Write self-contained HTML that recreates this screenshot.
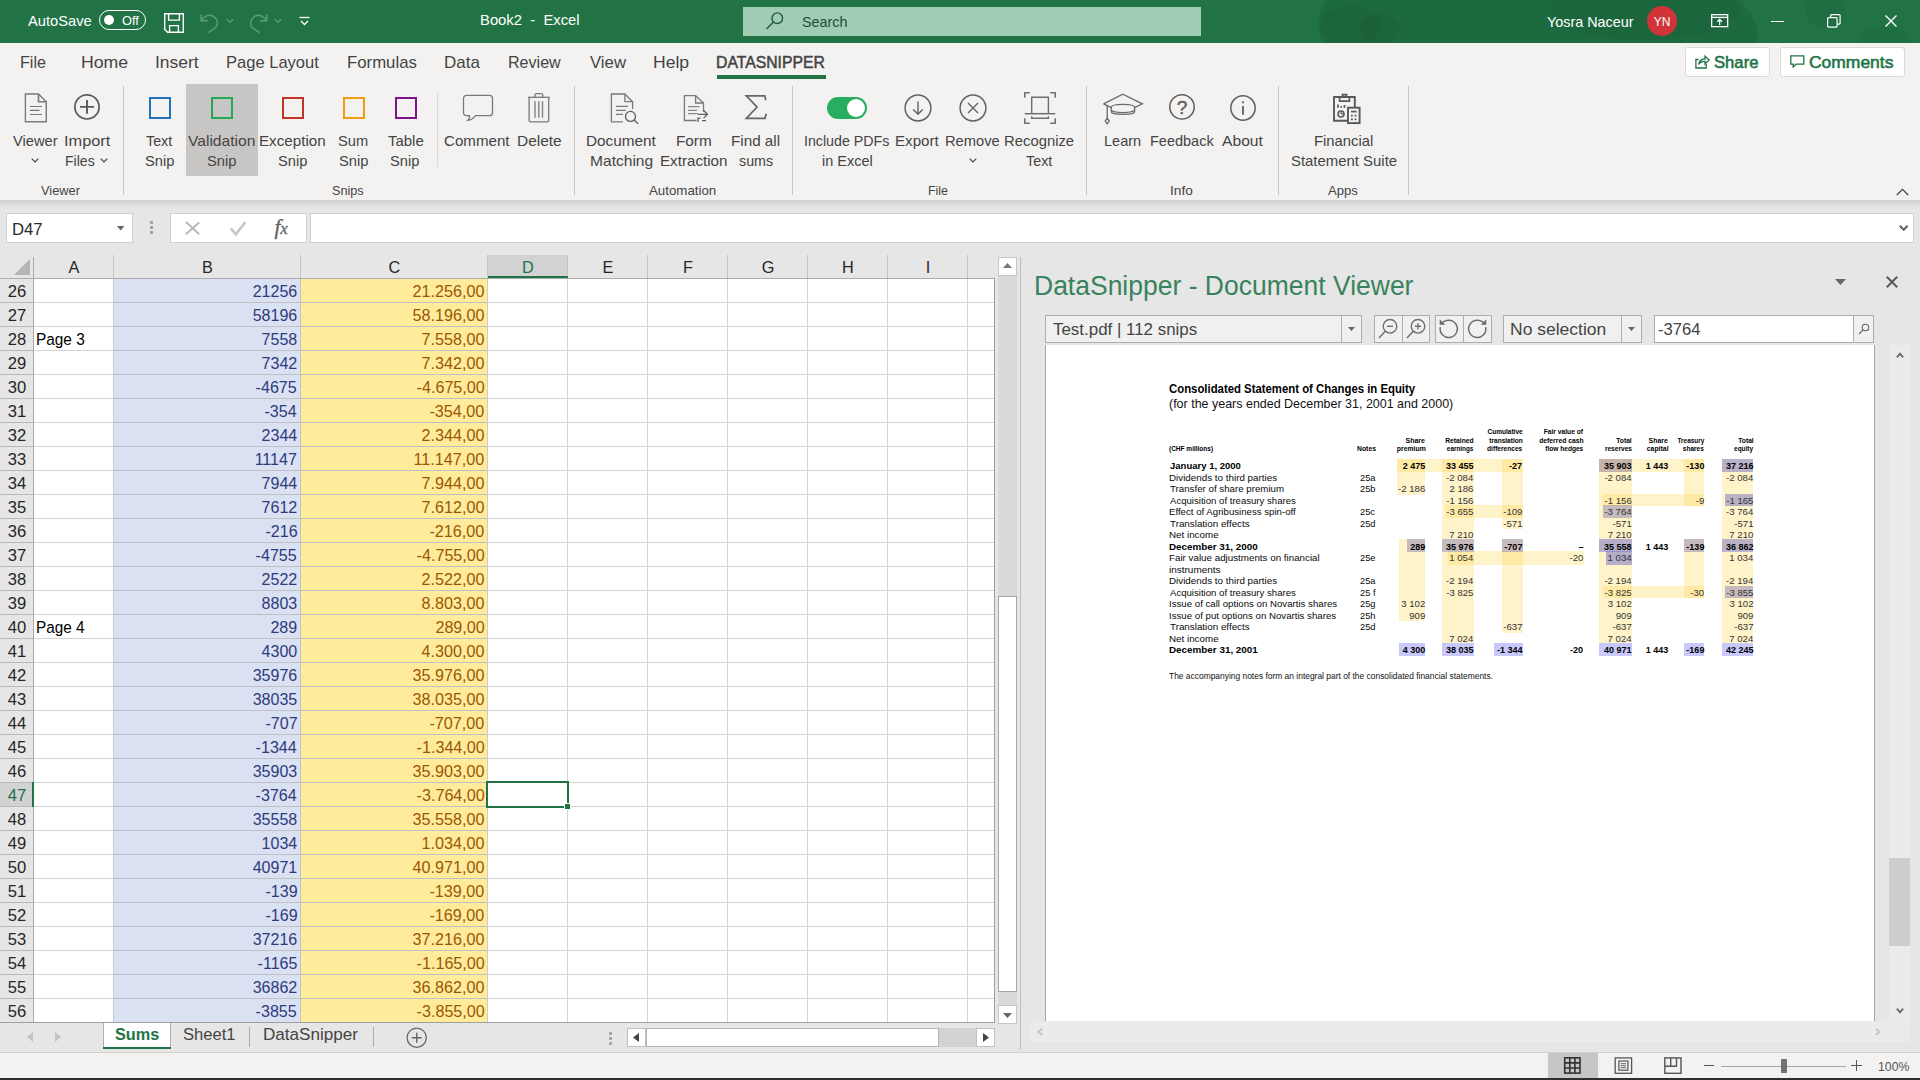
<!DOCTYPE html>
<html><head><meta charset="utf-8"><title>Book2 - Excel</title><style>
*{box-sizing:border-box;margin:0;padding:0}
html,body{width:1920px;height:1080px;overflow:hidden;background:#e6e6e6;font-family:"Liberation Sans",sans-serif;}
#root{position:relative;width:1920px;height:1080px;overflow:hidden;background:#e6e6e6}
.t{position:absolute;white-space:pre;display:block}
.b{position:absolute;display:block}
svg{position:absolute;overflow:visible}
</style></head><body><div id="root">
<div class="b" style="left:0px;top:0px;width:1920px;height:43px;background:#217346;"></div>
<div class="b" style="left:1300px;top:0;width:620px;height:43px;overflow:hidden"><div class="b" style="left:18px;top:-8px;width:440px;height:70px;border-radius:40px 60px 30px 50px;background:rgba(0,0,0,.075)"></div><div class="b" style="left:20px;top:6px;width:60px;height:40px;border-radius:50%;background:rgba(0,0,0,.05)"></div><div class="b" style="left:60px;top:14px;width:40px;height:30px;border-radius:50%;background:rgba(0,0,0,.04)"></div><div class="b" style="left:250px;top:-20px;width:190px;height:60px;border-radius:50%;background:rgba(0,0,0,.035)"></div><div class="b" style="left:505px;top:-6px;width:40px;height:34px;border-radius:50%;background:rgba(0,0,0,.05)"></div><div class="b" style="left:560px;top:26px;width:50px;height:30px;border-radius:50%;background:rgba(0,0,0,.05)"></div></div>
<span class="t" style="top:13px;font-size:14.6px;line-height:16px;color:#fff;left:28.00px;transform-origin:0 50%;transform:scaleX(1.0053);">AutoSave</span>
<div class="b" style="left:99px;top:10px;width:47px;height:20px;border:1.3px solid #fff;border-radius:10px"></div>
<div class="b" style="left:104px;top:15px;width:10px;height:10px;border-radius:50%;background:#fff"></div>
<span class="t" style="top:13px;font-size:13.6px;line-height:15px;color:#fff;left:121.92px;transform-origin:0 50%;transform:scaleX(0.9419);">Off</span>
<svg style="left:163px;top:11px" width="22" height="22" viewBox="0 0 22 22" fill="none" stroke="#fff" stroke-width="1.4"><path d="M1.7 2.7h18.6v18.6H4.6L1.7 18.4z"/><path d="M5.6 2.7v6.4h10.8V2.7"/><path d="M6.6 21.3v-6.7h8.8v6.7"/></svg>
<svg style="left:199px;top:12px" width="22" height="22" viewBox="0 0 22 22" fill="none" stroke="#5f9c7c" stroke-width="1.4"><path d="M2.2 2.2v6.6h6.6"/><path d="M2.6 8.6c2.2-4.6 7.2-6.6 11.4-4.4c4.4 2.4 5.6 7.6 2.8 11.400L9.500 20.6"/></svg>
<svg style="left:226px;top:18px" width="8" height="6" viewBox="0 0 8 6" fill="none" stroke="#5f9c7c" stroke-width="1.2"><path d="M.8 1l3.200 3.200L7.200 1"/></svg>
<svg style="left:247px;top:12px" width="22" height="22" viewBox="0 0 22 22" fill="none" stroke="#5f9c7c" stroke-width="1.4"><path d="M19.800 2.200v6.600h-6.600"/><path d="M19.400 8.600c-2.200-4.600-7.200-6.600-11.400-4.400c-4.400 2.400-5.600 7.600-2.800 11.400L12.500 20.600"/></svg>
<svg style="left:274px;top:18px" width="8" height="6" viewBox="0 0 8 6" fill="none" stroke="#5f9c7c" stroke-width="1.2"><path d="M.8 1l3.200 3.200L7.200 1"/></svg>
<svg style="left:299px;top:16px" width="11" height="11" viewBox="0 0 11 11" fill="none" stroke="#fff" stroke-width="1.3"><path d="M.5 1.500h10"/><path d="M2 5l3.500 3.500L9 5"/></svg>
<span class="t" style="top:11px;font-size:15px;line-height:17px;color:#fff;left:479.81px;transform-origin:0 50%;transform:scaleX(0.9878);">Book2  -  Excel</span>
<div class="b" style="left:743px;top:7px;width:458px;height:29px;background:#9fccb3;"></div>
<svg style="left:765px;top:11px" width="20" height="20" viewBox="0 0 20 20" fill="none" stroke="#1e5c3a" stroke-width="1.400"><circle cx="12.300" cy="7.200" r="5.300"/><path d="M8.500 11L1.500 18"/></svg>
<span class="t" style="top:14px;font-size:14.6px;line-height:16px;color:#1e4e33;left:802.35px;transform-origin:0 50%;transform:scaleX(0.9849);">Search</span>
<span class="t" style="top:13px;font-size:15px;line-height:17px;color:#fff;left:1547.21px;transform-origin:0 50%;transform:scaleX(0.9576);">Yosra Naceur</span>
<div class="b" style="left:1647px;top:6px;width:30px;height:30px;border-radius:50%;background:#d13438"></div>
<span class="t" style="top:15px;font-size:12.5px;line-height:14px;color:#fff;left:1662.00px;transform-origin:50% 50%;transform:translateX(-50%) scaleX(0.9612);">YN</span>
<svg style="left:1711px;top:14px" width="18" height="14" viewBox="0 0 18 14" fill="none" stroke="#fff" stroke-width="1.300"><rect x=".65" y=".65" width="16" height="12"/><path d="M.65 3.400h16"/><path d="M8.650 11V5.600M6.200 7.800l2.450-2.400 2.450 2.400"/></svg>
<div class="b" style="left:1771px;top:21px;width:13px;height:1.3px;background:#fff;"></div>
<svg style="left:1827px;top:14px" width="14" height="14" viewBox="0 0 14 14" fill="none" stroke="#fff" stroke-width="1.200"><rect x=".6" y="3.600" width="9.500" height="9.500" rx="1"/><path d="M3.600 3.400V1.600a1 1 0 0 1 1-1h7.500a1 1 0 0 1 1 1v7.500a1 1 0 0 1-1 1h-1.900"/></svg>
<svg style="left:1885px;top:15px" width="12" height="12" viewBox="0 0 12 12" fill="none" stroke="#fff" stroke-width="1.400"><path d="M.5.5l11 11M11.500.5l-11 11"/></svg>
<div class="b" style="left:0px;top:43px;width:1920px;height:157px;background:#f3f2f1;"></div>
<span class="t" style="top:53px;font-size:16.2px;line-height:18px;color:#444;left:20.21px;transform-origin:0 50%;transform:scaleX(0.9960);">File</span>
<span class="t" style="top:53px;font-size:16.2px;line-height:18px;color:#444;left:81.09px;transform-origin:0 50%;transform:scaleX(1.0915);">Home</span>
<span class="t" style="top:53px;font-size:16.2px;line-height:18px;color:#444;left:154.93px;transform-origin:0 50%;transform:scaleX(1.0780);">Insert</span>
<span class="t" style="top:53px;font-size:16.2px;line-height:18px;color:#444;left:226.18px;transform-origin:0 50%;transform:scaleX(1.0214);">Page Layout</span>
<span class="t" style="top:53px;font-size:16.2px;line-height:18px;color:#444;left:347.16px;transform-origin:0 50%;transform:scaleX(1.0358);">Formulas</span>
<span class="t" style="top:53px;font-size:16.2px;line-height:18px;color:#444;left:444.14px;transform-origin:0 50%;transform:scaleX(1.0478);">Data</span>
<span class="t" style="top:53px;font-size:16.2px;line-height:18px;color:#444;left:508.21px;transform-origin:0 50%;transform:scaleX(0.9927);">Review</span>
<span class="t" style="top:53px;font-size:16.2px;line-height:18px;color:#444;left:589.96px;transform-origin:0 50%;transform:scaleX(1.0336);">View</span>
<span class="t" style="top:53px;font-size:16.2px;line-height:18px;color:#444;left:653.09px;transform-origin:0 50%;transform:scaleX(1.0846);">Help</span>
<span class="t" style="top:53px;font-size:16.2px;line-height:18px;color:#444;left:716.24px;transform-origin:0 50%;transform:scaleX(0.9735);-webkit-text-stroke:.5px #444;">DATASNIPPER</span>
<div class="b" style="left:717px;top:75px;width:109px;height:4px;background:#217346;"></div>
<div class="b" style="left:1685px;top:47px;width:85px;height:30px;background:#fff;border:1px solid #dcdad8;border-radius:3px"></div>
<svg style="left:1695px;top:54px" width="15" height="15" viewBox="0 0 15 15" fill="none" stroke="#217346" stroke-width="1.300"><path d="M3.500 5.500H.9v8.500h10.300V10"/><path d="M3.600 10.500c.5-3.500 3-5.500 6.400-5.500V2.200l4.200 3.900L10 10V7.400C7.200 7.400 5 8.200 3.600 10.500z"/></svg>
<span class="t" style="top:53px;font-size:16.2px;line-height:18px;color:#217346;left:1714.25px;transform-origin:0 50%;transform:scaleX(1.0288);-webkit-text-stroke:.55px #217346;">Share</span>
<div class="b" style="left:1780px;top:47px;width:125px;height:30px;background:#fff;border:1px solid #dcdad8;border-radius:3px"></div>
<svg style="left:1790px;top:55px" width="15" height="14" viewBox="0 0 15 14" fill="none" stroke="#217346" stroke-width="1.300"><path d="M.8.800h13v8.400H6L3.200 12V9.200H.8z"/></svg>
<span class="t" style="top:53px;font-size:16.2px;line-height:18px;color:#217346;left:1809.13px;transform-origin:0 50%;transform:scaleX(1.0786);-webkit-text-stroke:.55px #217346;">Comments</span>
<div class="b" style="left:186px;top:84px;width:72px;height:92px;background:#c8c6c4;"></div>
<div class="b" style="left:123px;top:86px;width:1px;height:109px;background:#c8c6c4;"></div>
<div class="b" style="left:574px;top:86px;width:1px;height:109px;background:#c8c6c4;"></div>
<div class="b" style="left:792px;top:86px;width:1px;height:109px;background:#c8c6c4;"></div>
<div class="b" style="left:1086px;top:86px;width:1px;height:109px;background:#c8c6c4;"></div>
<div class="b" style="left:1278px;top:86px;width:1px;height:109px;background:#c8c6c4;"></div>
<div class="b" style="left:1408px;top:86px;width:1px;height:109px;background:#c8c6c4;"></div>
<div class="b" style="left:437px;top:93px;width:1px;height:74px;background:#dddbd9;"></div>
<span class="t" style="top:133px;font-size:14.6px;line-height:16px;color:#444;left:13.26px;transform-origin:0 50%;transform:scaleX(1.0070);">Viewer</span>
<svg style="left:31px;top:157.5px" width="8" height="5" viewBox="0 0 8 5" fill="none" stroke="#444" stroke-width="1.200"><path d="M.7.600L4 3.900 7.300.6"/></svg>
<span class="t" style="top:133px;font-size:14.6px;line-height:16px;color:#444;left:63.83px;transform-origin:0 50%;transform:scaleX(1.1184);">Import</span>
<span class="t" style="top:153px;font-size:14.6px;line-height:16px;color:#444;left:65.37px;transform-origin:0 50%;transform:scaleX(0.9635);">Files</span>
<svg style="left:99.5px;top:157.5px" width="8" height="5" viewBox="0 0 8 5" fill="none" stroke="#444" stroke-width="1.200"><path d="M.7.600L4 3.900 7.300.6"/></svg>
<span class="t" style="top:133px;font-size:14.6px;line-height:16px;color:#444;left:146.41px;transform-origin:0 50%;transform:scaleX(0.9777);">Text</span>
<span class="t" style="top:153px;font-size:14.6px;line-height:16px;color:#444;left:144.64px;transform-origin:0 50%;transform:scaleX(1.0086);">Snip</span>
<span class="t" style="top:133px;font-size:14.6px;line-height:16px;color:#444;left:188.36px;transform-origin:0 50%;transform:scaleX(1.0695);">Validation</span>
<span class="t" style="top:153px;font-size:14.6px;line-height:16px;color:#444;left:206.64px;transform-origin:0 50%;transform:scaleX(1.0086);">Snip</span>
<span class="t" style="top:133px;font-size:14.6px;line-height:16px;color:#444;left:259.29px;transform-origin:0 50%;transform:scaleX(1.0401);">Exception</span>
<span class="t" style="top:153px;font-size:14.6px;line-height:16px;color:#444;left:277.64px;transform-origin:0 50%;transform:scaleX(1.0086);">Snip</span>
<span class="t" style="top:133px;font-size:14.6px;line-height:16px;color:#444;left:338.34px;transform-origin:0 50%;transform:scaleX(1.0036);">Sum</span>
<span class="t" style="top:153px;font-size:14.6px;line-height:16px;color:#444;left:338.64px;transform-origin:0 50%;transform:scaleX(1.0086);">Snip</span>
<span class="t" style="top:133px;font-size:14.6px;line-height:16px;color:#444;left:387.70px;transform-origin:0 50%;transform:scaleX(1.0241);">Table</span>
<span class="t" style="top:153px;font-size:14.6px;line-height:16px;color:#444;left:390.34px;transform-origin:0 50%;transform:scaleX(1.0086);">Snip</span>
<span class="t" style="top:133px;font-size:14.6px;line-height:16px;color:#444;left:444.24px;transform-origin:0 50%;transform:scaleX(1.0354);">Comment</span>
<span class="t" style="top:133px;font-size:14.6px;line-height:16px;color:#444;left:516.56px;transform-origin:0 50%;transform:scaleX(1.0593);">Delete</span>
<span class="t" style="top:133px;font-size:14.6px;line-height:16px;color:#444;left:586.17px;transform-origin:0 50%;transform:scaleX(1.0506);">Document</span>
<span class="t" style="top:153px;font-size:14.6px;line-height:16px;color:#444;left:590.05px;transform-origin:0 50%;transform:scaleX(1.0672);">Matching</span>
<span class="t" style="top:133px;font-size:14.6px;line-height:16px;color:#444;left:675.77px;transform-origin:0 50%;transform:scaleX(1.0489);">Form</span>
<span class="t" style="top:153px;font-size:14.6px;line-height:16px;color:#444;left:660.19px;transform-origin:0 50%;transform:scaleX(1.0395);">Extraction</span>
<span class="t" style="top:133px;font-size:14.6px;line-height:16px;color:#444;left:731.28px;transform-origin:0 50%;transform:scaleX(1.0430);">Find all</span>
<span class="t" style="top:153px;font-size:14.6px;line-height:16px;color:#444;left:739.41px;transform-origin:0 50%;transform:scaleX(0.9770);">sums</span>
<span class="t" style="top:133px;font-size:14.6px;line-height:16px;color:#444;left:804.12px;transform-origin:0 50%;transform:scaleX(0.9742);">Include PDFs</span>
<span class="t" style="top:153px;font-size:14.6px;line-height:16px;color:#444;left:821.56px;transform-origin:0 50%;transform:scaleX(0.9911);">in Excel</span>
<span class="t" style="top:133px;font-size:14.6px;line-height:16px;color:#444;left:895.39px;transform-origin:0 50%;transform:scaleX(1.0353);">Export</span>
<span class="t" style="top:133px;font-size:14.6px;line-height:16px;color:#444;left:945.12px;transform-origin:0 50%;transform:scaleX(1.0065);">Remove</span>
<svg style="left:968.5px;top:157.5px" width="8" height="5" viewBox="0 0 8 5" fill="none" stroke="#444" stroke-width="1.200"><path d="M.7.600L4 3.900 7.300.6"/></svg>
<span class="t" style="top:133px;font-size:14.6px;line-height:16px;color:#444;left:1004.21px;transform-origin:0 50%;transform:scaleX(1.0164);">Recognize</span>
<span class="t" style="top:153px;font-size:14.6px;line-height:16px;color:#444;left:1026.21px;transform-origin:0 50%;transform:scaleX(0.9815);">Text</span>
<span class="t" style="top:133px;font-size:14.6px;line-height:16px;color:#444;left:1104.34px;transform-origin:0 50%;transform:scaleX(0.9955);">Learn</span>
<span class="t" style="top:133px;font-size:14.6px;line-height:16px;color:#444;left:1150.24px;transform-origin:0 50%;transform:scaleX(0.9937);">Feedback</span>
<span class="t" style="top:133px;font-size:14.6px;line-height:16px;color:#444;left:1222.20px;transform-origin:0 50%;transform:scaleX(1.0717);">About</span>
<span class="t" style="top:133px;font-size:14.6px;line-height:16px;color:#444;left:1314.11px;transform-origin:0 50%;transform:scaleX(1.0156);">Financial</span>
<span class="t" style="top:153px;font-size:14.6px;line-height:16px;color:#444;left:1290.53px;transform-origin:0 50%;transform:scaleX(1.0214);">Statement Suite</span>
<span class="t" style="top:183px;font-size:13px;line-height:15px;color:#444;left:40.97px;transform-origin:0 50%;transform:scaleX(0.9857);">Viewer</span>
<span class="t" style="top:183px;font-size:13px;line-height:15px;color:#444;left:332.43px;transform-origin:0 50%;transform:scaleX(0.9748);">Snips</span>
<span class="t" style="top:183px;font-size:13px;line-height:15px;color:#444;left:649.30px;transform-origin:0 50%;transform:scaleX(1.0226);">Automation</span>
<span class="t" style="top:183px;font-size:13px;line-height:15px;color:#444;left:928.31px;transform-origin:0 50%;transform:scaleX(0.9515);">File</span>
<span class="t" style="top:183px;font-size:13px;line-height:15px;color:#444;left:1169.77px;transform-origin:0 50%;transform:scaleX(1.0507);">Info</span>
<span class="t" style="top:183px;font-size:13px;line-height:15px;color:#444;left:1328.30px;transform-origin:0 50%;transform:scaleX(1.0074);">Apps</span>
<svg style="left:1896px;top:188px" width="13" height="8" viewBox="0 0 13 8" fill="none" stroke="#444" stroke-width="1.300"><path d="M.8 7L6.500 1.300 12.200 7"/></svg>
<div class="b" style="left:149px;top:97px;width:22px;height:22px;border:2px solid #1e73be;"></div>
<div class="b" style="left:211px;top:97px;width:22px;height:22px;border:2px solid #22a955;"></div>
<div class="b" style="left:282px;top:97px;width:22px;height:22px;border:2px solid #c3352b;"></div>
<div class="b" style="left:343px;top:97px;width:22px;height:22px;border:2px solid #f39c12;"></div>
<div class="b" style="left:395px;top:97px;width:22px;height:22px;border:2px solid #830f91;"></div>
<svg style="left:24px;top:92px" width="24" height="31" viewBox="0 0 24 31" fill="none" stroke="#7a7a7a" stroke-width="1.4"><path d="M1.400 2h13.100l7.800 7.800V29.700H1.400z"/><path d="M14.500 2v7.800h7.800" stroke-width="1.600"/><path d="M6 14.500h12M6 18.400h9.500M6 22.500h12" stroke-width="1.200"/></svg>
<svg style="left:73px;top:93px" width="28" height="28" viewBox="0 0 28 28" fill="none" stroke="#595959" stroke-width="1.3"><circle cx="14" cy="13.900" r="12.100" stroke-width="1.700"/><path d="M7 13.900h14M14 7v13.800" stroke-width="1.900"/></svg>
<svg style="left:462px;top:93px" width="32" height="29" viewBox="0 0 32 29" fill="none" stroke="#7a7a7a" stroke-width="1.3"><path d="M4.500 2.400h23a3 3 0 0 1 3 3v14.300a3 3 0 0 1-3 3H13.400c-1.800 2.600-3.800 4.400-7.600 4.700c1.600-1.200 1.900-2.800 1.600-4.700H4.500a3 3 0 0 1-3-3V5.400a3 3 0 0 1 3-3z"/></svg>
<svg style="left:527px;top:92px" width="24" height="31" viewBox="0 0 24 31" fill="none" stroke="#7a7a7a" stroke-width="1.3"><path d="M1 5.300h21.800"/><path d="M8 5.300V3a1.400 1.400 0 0 1 1.400-1.400h5a1.400 1.400 0 0 1 1.400 1.400v2.300"/><path d="M2.100 5.300v23.200a1.400 1.400 0 0 0 1.400 1.400h16.800a1.400 1.400 0 0 0 1.400-1.400V5.300"/><path d="M8 9.200v16.500M11.800 9.200v16.500M15.500 9.200v16.500" stroke="#8a8a8a" stroke-width="1.500"/></svg>
<svg style="left:610px;top:92px" width="30" height="33" viewBox="0 0 30 33" fill="none" stroke="#7a7a7a" stroke-width="1.3"><path d="M12.800 29.800H1.400V2h13.500l7.700 7.700v7.500"/><path d="M14.900 2v7.700h7.700"/><path d="M6 14.400h12M6 18.400h10M6 22.300h7"/><circle cx="20.500" cy="24.400" r="5" stroke="#5e5e5e"/><path d="M24.100 28l4 3.700" stroke="#5e5e5e"/></svg>
<svg style="left:683px;top:94px" width="26" height="29" viewBox="0 0 26 29" fill="none" stroke="#7a7a7a" stroke-width="1.3"><path d="M13.500 26.500H1.400V1.700h11.200l7.900 7.300v9"/><path d="M12.600 1.700v7.300h7.900"/><path d="M5 12.600h11.500M5 16.400h9M5 19.700h10" stroke="#8a8a8a"/><path d="M15 20.300h9.300M20.600 16.500l3.900 3.800l-3.900 3.800" stroke="#5e5e5e"/><path d="M15 28v-3.800h2.500M19 26.700h4" stroke="#5e5e5e"/></svg>
<svg style="left:744px;top:94px" width="24" height="26" viewBox="0 0 24 26" fill="none" stroke="#666" stroke-width="1.7"><path d="M21.800 6.400L20.800 1.800H2.300L13 13 2.300 24.300h18.700l1.300-4.500" stroke-linejoin="miter"/></svg>
<div class="b" style="left:827px;top:97px;width:40px;height:22px;border-radius:11px;background:#27ae60"></div>
<div class="b" style="left:847px;top:99px;width:18px;height:18px;border-radius:50%;background:#fff"></div>
<svg style="left:904px;top:94px" width="28" height="28" viewBox="0 0 28 28" fill="none" stroke="#626262" stroke-width="1.3"><circle cx="14" cy="14" r="12.900" stroke-width="1.500"/><path d="M14 7.500v12.500M9.300 15.500l4.700 4.700 4.700-4.700" stroke-width="1.400"/></svg>
<svg style="left:959px;top:94px" width="28" height="28" viewBox="0 0 28 28" fill="none" stroke="#626262" stroke-width="1.3"><circle cx="14" cy="14" r="12.900" stroke-width="1.500"/><path d="M9 9l10 10M19 9L9 19" stroke-width="1.400"/></svg>
<svg style="left:1023px;top:91px" width="34" height="34" viewBox="0 0 34 34" fill="none" stroke="#6e6e6e" stroke-width="1.4"><path d="M1.800 6.800V1.800h5M27.200 1.800h5v5M32.200 27.200v5h-5M6.800 32.200h-5v-5" stroke-width="1.500"/><path d="M8.700 22.500V6.300h16.700v16.200"/><path d="M1.700 22.700h30.600" stroke-width="1.500"/><path d="M8.700 25.300v2h16.700v-2"/></svg>
<svg style="left:1102px;top:92px" width="42" height="33" viewBox="0 0 42 33" fill="none" stroke="#6a6a6a" stroke-width="1.3"><path d="M1.600 11.800L20.800 2.200 40.300 11.800 32.600 15.600"/><path d="M1.600 11.800l7.700 3.800"/><path d="M9.300 15.300c0-1.900 5.100-3 11.600-3s11.700 1.100 11.700 3v4.500c0 1.600-5.200 2.600-11.700 2.600s-11.600-1-11.600-2.600z"/><path d="M9.600 18.600c2 1.500 6 2 11.300 2s9.400-.5 11.300-2"/><path d="M5.200 13.600v12.600"/><path d="M5.200 26.200l2 2.900-2 2.700-2-2.700z"/></svg>
<svg style="left:1168px;top:93px" width="28" height="28" viewBox="0 0 28 28" fill="none" stroke="#5e5e5e" stroke-width="1.3"><circle cx="14" cy="13.900" r="12.200" stroke-width="1.500"/></svg>
<span class="t" style="top:97px;font-size:19px;line-height:21px;color:#5e5e5e;left:1182.00px;transform-origin:50% 50%;transform:translateX(-50%);-webkit-text-stroke:.4px #5e5e5e;">?</span>
<svg style="left:1229px;top:94px" width="28" height="28" viewBox="0 0 28 28" fill="none" stroke="#5e5e5e" stroke-width="1.3"><circle cx="14" cy="14" r="12.200" stroke-width="1.500"/><path d="M14 12v8.700" stroke-width="1.800"/><circle cx="14" cy="8.300" r="1.100" fill="#5e5e5e" stroke="none"/></svg>
<svg style="left:1332px;top:93px" width="30" height="32" viewBox="0 0 30 32" fill="none" stroke="#595959" stroke-width="1.9"><path d="M15.300 27.800H2V4h20.800v10"/><path d="M7.600 4v4.200h9.800V4M10.500 4V1.600h4V4" stroke-width="1.700"/><path d="M6 11.500v3.200M9.300 13v1.700M12.500 12v2.700" stroke-width="1.700"/><circle cx="9" cy="21" r="3" stroke-width="1.600"/><path d="M9 21V18.500M9 21h2.500" stroke-width="1.200"/><rect x="16" y="14.700" width="11.600" height="15.400" fill="#f3f2f1"/><path d="M19 18.600h5.600" stroke-width="1.700"/><path d="M19 22.700h1.800M22.600 22.700h1.800M19 26.300h1.800M22.600 26.300h1.800" stroke-width="1.800"/></svg>
<div class="b" style="left:0;top:200px;width:1920px;height:8px;background:linear-gradient(#cfcfcf,#e6e6e6)"></div>
<div class="b" style="left:6px;top:213px;width:127px;height:30px;background:#fff;border:1px solid #d0d0d0;"></div>
<span class="t" style="top:221px;font-size:16px;line-height:17px;color:#2b2b2b;left:11.66px;transform-origin:0 50%;transform:scaleX(1.0447);">D47</span>
<svg style="left:117px;top:226px" width="7.4" height="4.4" viewBox="0 0 7.4 4.4"><path d="M0 0h7.400L3.700 4.400z" fill="#666"/></svg>
<div class="b" style="left:150px;top:221px;width:3px;height:3px;background:#a3a3a3;"></div>
<div class="b" style="left:150px;top:226px;width:3px;height:3px;background:#a3a3a3;"></div>
<div class="b" style="left:150px;top:231px;width:3px;height:3px;background:#a3a3a3;"></div>
<div class="b" style="left:170px;top:213px;width:137px;height:30px;background:#fff;border:1px solid #d0d0d0;"></div>
<svg style="left:185px;top:221px" width="15" height="14" viewBox="0 0 15 14" fill="none" stroke="#b8b8b8" stroke-width="1.9"><path d="M.8 .8l13.400 12.400M14.200 1.500L.8 13.200"/></svg>
<svg style="left:229px;top:220px" width="18" height="16" viewBox="0 0 18 16" fill="none" stroke="#c8c8c8" stroke-width="2.7"><path d="M1.800 8.300l5 6L16.300 2.200"/></svg>
<span class="t" style="left:274.500px;top:214px;font-family:'Liberation Serif',serif;font-style:italic;font-weight:400;font-size:21.500px;line-height:26px;color:#606060;letter-spacing:-.3px;-webkit-text-stroke:.3px #606060">f<span style="font-size:17px">x</span></span>
<div class="b" style="left:310px;top:213px;width:1604px;height:30px;background:#fff;border:1px solid #d0d0d0;"></div>
<svg style="left:1899px;top:225px" width="10" height="6" viewBox="0 0 10 6" fill="none" stroke="#666" stroke-width="2.200"><path d="M.8.800L4.700 4.700 8.600.8"/></svg>
<div class="b" style="left:0px;top:255px;width:995px;height:768px;background:#fff;"></div>
<div class="b" style="left:0px;top:255px;width:995px;height:23px;background:#e6e6e6;"></div>
<div class="b" style="left:0px;top:278px;width:33px;height:745px;background:#e6e6e6;"></div>
<div class="b" style="left:114px;top:279px;width:187px;height:744px;background:#dae1f3;"></div>
<div class="b" style="left:301px;top:279px;width:187px;height:744px;background:#ffeb9c;"></div>
<div class="b" style="left:488px;top:255px;width:80px;height:23px;background:#d2d2d2;"></div>
<div class="b" style="left:0px;top:783px;width:33px;height:23px;background:#d2d2d2;"></div>
<div class="b" style="left:33px;top:302px;width:961px;height:1px;background:#d4d4d4;"></div>
<div class="b" style="left:114px;top:302px;width:374px;height:1px;background:#bfc0c3;"></div>
<div class="b" style="left:0px;top:302px;width:33px;height:1px;background:#b9b9b9;"></div>
<div class="b" style="left:33px;top:326px;width:961px;height:1px;background:#d4d4d4;"></div>
<div class="b" style="left:114px;top:326px;width:374px;height:1px;background:#bfc0c3;"></div>
<div class="b" style="left:0px;top:326px;width:33px;height:1px;background:#b9b9b9;"></div>
<div class="b" style="left:33px;top:350px;width:961px;height:1px;background:#d4d4d4;"></div>
<div class="b" style="left:114px;top:350px;width:374px;height:1px;background:#bfc0c3;"></div>
<div class="b" style="left:0px;top:350px;width:33px;height:1px;background:#b9b9b9;"></div>
<div class="b" style="left:33px;top:374px;width:961px;height:1px;background:#d4d4d4;"></div>
<div class="b" style="left:114px;top:374px;width:374px;height:1px;background:#bfc0c3;"></div>
<div class="b" style="left:0px;top:374px;width:33px;height:1px;background:#b9b9b9;"></div>
<div class="b" style="left:33px;top:398px;width:961px;height:1px;background:#d4d4d4;"></div>
<div class="b" style="left:114px;top:398px;width:374px;height:1px;background:#bfc0c3;"></div>
<div class="b" style="left:0px;top:398px;width:33px;height:1px;background:#b9b9b9;"></div>
<div class="b" style="left:33px;top:422px;width:961px;height:1px;background:#d4d4d4;"></div>
<div class="b" style="left:114px;top:422px;width:374px;height:1px;background:#bfc0c3;"></div>
<div class="b" style="left:0px;top:422px;width:33px;height:1px;background:#b9b9b9;"></div>
<div class="b" style="left:33px;top:446px;width:961px;height:1px;background:#d4d4d4;"></div>
<div class="b" style="left:114px;top:446px;width:374px;height:1px;background:#bfc0c3;"></div>
<div class="b" style="left:0px;top:446px;width:33px;height:1px;background:#b9b9b9;"></div>
<div class="b" style="left:33px;top:470px;width:961px;height:1px;background:#d4d4d4;"></div>
<div class="b" style="left:114px;top:470px;width:374px;height:1px;background:#bfc0c3;"></div>
<div class="b" style="left:0px;top:470px;width:33px;height:1px;background:#b9b9b9;"></div>
<div class="b" style="left:33px;top:494px;width:961px;height:1px;background:#d4d4d4;"></div>
<div class="b" style="left:114px;top:494px;width:374px;height:1px;background:#bfc0c3;"></div>
<div class="b" style="left:0px;top:494px;width:33px;height:1px;background:#b9b9b9;"></div>
<div class="b" style="left:33px;top:518px;width:961px;height:1px;background:#d4d4d4;"></div>
<div class="b" style="left:114px;top:518px;width:374px;height:1px;background:#bfc0c3;"></div>
<div class="b" style="left:0px;top:518px;width:33px;height:1px;background:#b9b9b9;"></div>
<div class="b" style="left:33px;top:542px;width:961px;height:1px;background:#d4d4d4;"></div>
<div class="b" style="left:114px;top:542px;width:374px;height:1px;background:#bfc0c3;"></div>
<div class="b" style="left:0px;top:542px;width:33px;height:1px;background:#b9b9b9;"></div>
<div class="b" style="left:33px;top:566px;width:961px;height:1px;background:#d4d4d4;"></div>
<div class="b" style="left:114px;top:566px;width:374px;height:1px;background:#bfc0c3;"></div>
<div class="b" style="left:0px;top:566px;width:33px;height:1px;background:#b9b9b9;"></div>
<div class="b" style="left:33px;top:590px;width:961px;height:1px;background:#d4d4d4;"></div>
<div class="b" style="left:114px;top:590px;width:374px;height:1px;background:#bfc0c3;"></div>
<div class="b" style="left:0px;top:590px;width:33px;height:1px;background:#b9b9b9;"></div>
<div class="b" style="left:33px;top:614px;width:961px;height:1px;background:#d4d4d4;"></div>
<div class="b" style="left:114px;top:614px;width:374px;height:1px;background:#bfc0c3;"></div>
<div class="b" style="left:0px;top:614px;width:33px;height:1px;background:#b9b9b9;"></div>
<div class="b" style="left:33px;top:638px;width:961px;height:1px;background:#d4d4d4;"></div>
<div class="b" style="left:114px;top:638px;width:374px;height:1px;background:#bfc0c3;"></div>
<div class="b" style="left:0px;top:638px;width:33px;height:1px;background:#b9b9b9;"></div>
<div class="b" style="left:33px;top:662px;width:961px;height:1px;background:#d4d4d4;"></div>
<div class="b" style="left:114px;top:662px;width:374px;height:1px;background:#bfc0c3;"></div>
<div class="b" style="left:0px;top:662px;width:33px;height:1px;background:#b9b9b9;"></div>
<div class="b" style="left:33px;top:686px;width:961px;height:1px;background:#d4d4d4;"></div>
<div class="b" style="left:114px;top:686px;width:374px;height:1px;background:#bfc0c3;"></div>
<div class="b" style="left:0px;top:686px;width:33px;height:1px;background:#b9b9b9;"></div>
<div class="b" style="left:33px;top:710px;width:961px;height:1px;background:#d4d4d4;"></div>
<div class="b" style="left:114px;top:710px;width:374px;height:1px;background:#bfc0c3;"></div>
<div class="b" style="left:0px;top:710px;width:33px;height:1px;background:#b9b9b9;"></div>
<div class="b" style="left:33px;top:734px;width:961px;height:1px;background:#d4d4d4;"></div>
<div class="b" style="left:114px;top:734px;width:374px;height:1px;background:#bfc0c3;"></div>
<div class="b" style="left:0px;top:734px;width:33px;height:1px;background:#b9b9b9;"></div>
<div class="b" style="left:33px;top:758px;width:961px;height:1px;background:#d4d4d4;"></div>
<div class="b" style="left:114px;top:758px;width:374px;height:1px;background:#bfc0c3;"></div>
<div class="b" style="left:0px;top:758px;width:33px;height:1px;background:#b9b9b9;"></div>
<div class="b" style="left:33px;top:782px;width:961px;height:1px;background:#d4d4d4;"></div>
<div class="b" style="left:114px;top:782px;width:374px;height:1px;background:#bfc0c3;"></div>
<div class="b" style="left:0px;top:782px;width:33px;height:1px;background:#b9b9b9;"></div>
<div class="b" style="left:33px;top:806px;width:961px;height:1px;background:#d4d4d4;"></div>
<div class="b" style="left:114px;top:806px;width:374px;height:1px;background:#bfc0c3;"></div>
<div class="b" style="left:0px;top:806px;width:33px;height:1px;background:#b9b9b9;"></div>
<div class="b" style="left:33px;top:830px;width:961px;height:1px;background:#d4d4d4;"></div>
<div class="b" style="left:114px;top:830px;width:374px;height:1px;background:#bfc0c3;"></div>
<div class="b" style="left:0px;top:830px;width:33px;height:1px;background:#b9b9b9;"></div>
<div class="b" style="left:33px;top:854px;width:961px;height:1px;background:#d4d4d4;"></div>
<div class="b" style="left:114px;top:854px;width:374px;height:1px;background:#bfc0c3;"></div>
<div class="b" style="left:0px;top:854px;width:33px;height:1px;background:#b9b9b9;"></div>
<div class="b" style="left:33px;top:878px;width:961px;height:1px;background:#d4d4d4;"></div>
<div class="b" style="left:114px;top:878px;width:374px;height:1px;background:#bfc0c3;"></div>
<div class="b" style="left:0px;top:878px;width:33px;height:1px;background:#b9b9b9;"></div>
<div class="b" style="left:33px;top:902px;width:961px;height:1px;background:#d4d4d4;"></div>
<div class="b" style="left:114px;top:902px;width:374px;height:1px;background:#bfc0c3;"></div>
<div class="b" style="left:0px;top:902px;width:33px;height:1px;background:#b9b9b9;"></div>
<div class="b" style="left:33px;top:926px;width:961px;height:1px;background:#d4d4d4;"></div>
<div class="b" style="left:114px;top:926px;width:374px;height:1px;background:#bfc0c3;"></div>
<div class="b" style="left:0px;top:926px;width:33px;height:1px;background:#b9b9b9;"></div>
<div class="b" style="left:33px;top:950px;width:961px;height:1px;background:#d4d4d4;"></div>
<div class="b" style="left:114px;top:950px;width:374px;height:1px;background:#bfc0c3;"></div>
<div class="b" style="left:0px;top:950px;width:33px;height:1px;background:#b9b9b9;"></div>
<div class="b" style="left:33px;top:974px;width:961px;height:1px;background:#d4d4d4;"></div>
<div class="b" style="left:114px;top:974px;width:374px;height:1px;background:#bfc0c3;"></div>
<div class="b" style="left:0px;top:974px;width:33px;height:1px;background:#b9b9b9;"></div>
<div class="b" style="left:33px;top:998px;width:961px;height:1px;background:#d4d4d4;"></div>
<div class="b" style="left:114px;top:998px;width:374px;height:1px;background:#bfc0c3;"></div>
<div class="b" style="left:0px;top:998px;width:33px;height:1px;background:#b9b9b9;"></div>
<div class="b" style="left:33px;top:1022px;width:961px;height:1px;background:#d4d4d4;"></div>
<div class="b" style="left:114px;top:1022px;width:374px;height:1px;background:#bfc0c3;"></div>
<div class="b" style="left:0px;top:1022px;width:33px;height:1px;background:#b9b9b9;"></div>
<div class="b" style="left:113px;top:279px;width:1px;height:744px;background:#d4d4d4;"></div>
<div class="b" style="left:113px;top:255px;width:1px;height:23px;background:#c4c4c4;"></div>
<div class="b" style="left:300px;top:279px;width:1px;height:744px;background:#d4d4d4;"></div>
<div class="b" style="left:300px;top:255px;width:1px;height:23px;background:#c4c4c4;"></div>
<div class="b" style="left:487px;top:279px;width:1px;height:744px;background:#d4d4d4;"></div>
<div class="b" style="left:487px;top:255px;width:1px;height:23px;background:#c4c4c4;"></div>
<div class="b" style="left:567px;top:279px;width:1px;height:744px;background:#d4d4d4;"></div>
<div class="b" style="left:567px;top:255px;width:1px;height:23px;background:#c4c4c4;"></div>
<div class="b" style="left:647px;top:279px;width:1px;height:744px;background:#d4d4d4;"></div>
<div class="b" style="left:647px;top:255px;width:1px;height:23px;background:#c4c4c4;"></div>
<div class="b" style="left:727px;top:279px;width:1px;height:744px;background:#d4d4d4;"></div>
<div class="b" style="left:727px;top:255px;width:1px;height:23px;background:#c4c4c4;"></div>
<div class="b" style="left:807px;top:279px;width:1px;height:744px;background:#d4d4d4;"></div>
<div class="b" style="left:807px;top:255px;width:1px;height:23px;background:#c4c4c4;"></div>
<div class="b" style="left:887px;top:279px;width:1px;height:744px;background:#d4d4d4;"></div>
<div class="b" style="left:887px;top:255px;width:1px;height:23px;background:#c4c4c4;"></div>
<div class="b" style="left:967px;top:279px;width:1px;height:744px;background:#d4d4d4;"></div>
<div class="b" style="left:967px;top:255px;width:1px;height:23px;background:#c4c4c4;"></div>
<div class="b" style="left:113px;top:279px;width:1px;height:744px;background:#c9cbd1;"></div>
<div class="b" style="left:300px;top:279px;width:1px;height:744px;background:#c3c3c0;"></div>
<div class="b" style="left:487px;top:279px;width:1px;height:744px;background:#cfcdc0;"></div>
<div class="b" style="left:0px;top:278px;width:995px;height:1px;background:#ababab;"></div>
<div class="b" style="left:33px;top:257px;width:1px;height:766px;background:#ababab;"></div>
<div class="b" style="left:994px;top:278px;width:1px;height:745px;background:#9f9f9f;"></div>
<div class="b" style="left:0px;top:1022px;width:995px;height:1px;background:#9f9f9f;"></div>
<svg style="left:14px;top:259px" width="16" height="16" viewBox="0 0 16 16"><path d="M16 0v16H0z" fill="#b4b4b4"/></svg>
<span class="t" style="top:258px;font-size:16.3px;line-height:18px;color:#262626;left:74.00px;transform-origin:50% 50%;transform:translateX(-50%);">A</span>
<span class="t" style="top:258px;font-size:16.3px;line-height:18px;color:#262626;left:207.50px;transform-origin:50% 50%;transform:translateX(-50%);">B</span>
<span class="t" style="top:258px;font-size:16.3px;line-height:18px;color:#262626;left:394.50px;transform-origin:50% 50%;transform:translateX(-50%);">C</span>
<span class="t" style="top:258px;font-size:16.3px;line-height:18px;color:#217346;left:528.00px;transform-origin:50% 50%;transform:translateX(-50%);">D</span>
<span class="t" style="top:258px;font-size:16.3px;line-height:18px;color:#262626;left:608.00px;transform-origin:50% 50%;transform:translateX(-50%);">E</span>
<span class="t" style="top:258px;font-size:16.3px;line-height:18px;color:#262626;left:688.00px;transform-origin:50% 50%;transform:translateX(-50%);">F</span>
<span class="t" style="top:258px;font-size:16.3px;line-height:18px;color:#262626;left:768.00px;transform-origin:50% 50%;transform:translateX(-50%);">G</span>
<span class="t" style="top:258px;font-size:16.3px;line-height:18px;color:#262626;left:848.00px;transform-origin:50% 50%;transform:translateX(-50%);">H</span>
<span class="t" style="top:258px;font-size:16.3px;line-height:18px;color:#262626;left:928.00px;transform-origin:50% 50%;transform:translateX(-50%);">I</span>
<div class="b" style="left:488px;top:276px;width:80px;height:2px;background:#217346;"></div>
<span class="t" style="top:282px;font-size:16.3px;line-height:18px;color:#262626;left:17.00px;transform-origin:50% 50%;transform:translateX(-50%) scaleX(1.0200);">26</span>
<span class="t" style="top:282px;font-size:16.3px;line-height:18px;color:#2f3a7d;right:1622.90px;transform-origin:100% 50%;transform:scaleX(0.9850);">21256</span>
<span class="t" style="top:282px;font-size:16.3px;line-height:18px;color:#9c5700;right:1435.57px;transform-origin:100% 50%;transform:scaleX(0.9920);">21.256,00</span>
<span class="t" style="top:306px;font-size:16.3px;line-height:18px;color:#262626;left:17.00px;transform-origin:50% 50%;transform:translateX(-50%) scaleX(1.0200);">27</span>
<span class="t" style="top:306px;font-size:16.3px;line-height:18px;color:#2f3a7d;right:1622.90px;transform-origin:100% 50%;transform:scaleX(0.9850);">58196</span>
<span class="t" style="top:306px;font-size:16.3px;line-height:18px;color:#9c5700;right:1435.57px;transform-origin:100% 50%;transform:scaleX(0.9920);">58.196,00</span>
<span class="t" style="top:330px;font-size:16.3px;line-height:18px;color:#262626;left:17.00px;transform-origin:50% 50%;transform:translateX(-50%) scaleX(1.0200);">28</span>
<span class="t" style="top:330px;font-size:16.3px;line-height:18px;color:#2f3a7d;right:1622.92px;transform-origin:100% 50%;transform:scaleX(0.9850);">7558</span>
<span class="t" style="top:330px;font-size:16.3px;line-height:18px;color:#9c5700;right:1435.59px;transform-origin:100% 50%;transform:scaleX(0.9920);">7.558,00</span>
<span class="t" style="top:354px;font-size:16.3px;line-height:18px;color:#262626;left:17.00px;transform-origin:50% 50%;transform:translateX(-50%) scaleX(1.0200);">29</span>
<span class="t" style="top:354px;font-size:16.3px;line-height:18px;color:#2f3a7d;right:1622.80px;transform-origin:100% 50%;transform:scaleX(0.9850);">7342</span>
<span class="t" style="top:354px;font-size:16.3px;line-height:18px;color:#9c5700;right:1435.59px;transform-origin:100% 50%;transform:scaleX(0.9920);">7.342,00</span>
<span class="t" style="top:378px;font-size:16.3px;line-height:18px;color:#262626;left:17.00px;transform-origin:50% 50%;transform:translateX(-50%) scaleX(1.0200);">30</span>
<span class="t" style="top:378px;font-size:16.3px;line-height:18px;color:#2f3a7d;right:1622.95px;transform-origin:100% 50%;transform:scaleX(0.9850);">-4675</span>
<span class="t" style="top:378px;font-size:16.3px;line-height:18px;color:#9c5700;right:1435.58px;transform-origin:100% 50%;transform:scaleX(0.9920);">-4.675,00</span>
<span class="t" style="top:402px;font-size:16.3px;line-height:18px;color:#262626;left:17.00px;transform-origin:50% 50%;transform:translateX(-50%) scaleX(1.0200);">31</span>
<span class="t" style="top:402px;font-size:16.3px;line-height:18px;color:#2f3a7d;right:1623.13px;transform-origin:100% 50%;transform:scaleX(0.9850);">-354</span>
<span class="t" style="top:402px;font-size:16.3px;line-height:18px;color:#9c5700;right:1435.57px;transform-origin:100% 50%;transform:scaleX(0.9920);">-354,00</span>
<span class="t" style="top:426px;font-size:16.3px;line-height:18px;color:#262626;left:17.00px;transform-origin:50% 50%;transform:translateX(-50%) scaleX(1.0200);">32</span>
<span class="t" style="top:426px;font-size:16.3px;line-height:18px;color:#2f3a7d;right:1623.12px;transform-origin:100% 50%;transform:scaleX(0.9850);">2344</span>
<span class="t" style="top:426px;font-size:16.3px;line-height:18px;color:#9c5700;right:1435.59px;transform-origin:100% 50%;transform:scaleX(0.9920);">2.344,00</span>
<span class="t" style="top:450px;font-size:16.3px;line-height:18px;color:#262626;left:17.00px;transform-origin:50% 50%;transform:translateX(-50%) scaleX(1.0200);">33</span>
<span class="t" style="top:450px;font-size:16.3px;line-height:18px;color:#2f3a7d;right:1622.84px;transform-origin:100% 50%;transform:scaleX(0.9850);">11147</span>
<span class="t" style="top:450px;font-size:16.3px;line-height:18px;color:#9c5700;right:1435.56px;transform-origin:100% 50%;transform:scaleX(0.9920);">11.147,00</span>
<span class="t" style="top:474px;font-size:16.3px;line-height:18px;color:#262626;left:17.00px;transform-origin:50% 50%;transform:translateX(-50%) scaleX(1.0200);">34</span>
<span class="t" style="top:474px;font-size:16.3px;line-height:18px;color:#2f3a7d;right:1623.12px;transform-origin:100% 50%;transform:scaleX(0.9850);">7944</span>
<span class="t" style="top:474px;font-size:16.3px;line-height:18px;color:#9c5700;right:1435.59px;transform-origin:100% 50%;transform:scaleX(0.9920);">7.944,00</span>
<span class="t" style="top:498px;font-size:16.3px;line-height:18px;color:#262626;left:17.00px;transform-origin:50% 50%;transform:translateX(-50%) scaleX(1.0200);">35</span>
<span class="t" style="top:498px;font-size:16.3px;line-height:18px;color:#2f3a7d;right:1622.80px;transform-origin:100% 50%;transform:scaleX(0.9850);">7612</span>
<span class="t" style="top:498px;font-size:16.3px;line-height:18px;color:#9c5700;right:1435.59px;transform-origin:100% 50%;transform:scaleX(0.9920);">7.612,00</span>
<span class="t" style="top:522px;font-size:16.3px;line-height:18px;color:#262626;left:17.00px;transform-origin:50% 50%;transform:translateX(-50%) scaleX(1.0200);">36</span>
<span class="t" style="top:522px;font-size:16.3px;line-height:18px;color:#2f3a7d;right:1622.89px;transform-origin:100% 50%;transform:scaleX(0.9850);">-216</span>
<span class="t" style="top:522px;font-size:16.3px;line-height:18px;color:#9c5700;right:1435.57px;transform-origin:100% 50%;transform:scaleX(0.9920);">-216,00</span>
<span class="t" style="top:546px;font-size:16.3px;line-height:18px;color:#262626;left:17.00px;transform-origin:50% 50%;transform:translateX(-50%) scaleX(1.0200);">37</span>
<span class="t" style="top:546px;font-size:16.3px;line-height:18px;color:#2f3a7d;right:1622.95px;transform-origin:100% 50%;transform:scaleX(0.9850);">-4755</span>
<span class="t" style="top:546px;font-size:16.3px;line-height:18px;color:#9c5700;right:1435.58px;transform-origin:100% 50%;transform:scaleX(0.9920);">-4.755,00</span>
<span class="t" style="top:570px;font-size:16.3px;line-height:18px;color:#262626;left:17.00px;transform-origin:50% 50%;transform:translateX(-50%) scaleX(1.0200);">38</span>
<span class="t" style="top:570px;font-size:16.3px;line-height:18px;color:#2f3a7d;right:1622.80px;transform-origin:100% 50%;transform:scaleX(0.9850);">2522</span>
<span class="t" style="top:570px;font-size:16.3px;line-height:18px;color:#9c5700;right:1435.59px;transform-origin:100% 50%;transform:scaleX(0.9920);">2.522,00</span>
<span class="t" style="top:594px;font-size:16.3px;line-height:18px;color:#262626;left:17.00px;transform-origin:50% 50%;transform:translateX(-50%) scaleX(1.0200);">39</span>
<span class="t" style="top:594px;font-size:16.3px;line-height:18px;color:#2f3a7d;right:1622.88px;transform-origin:100% 50%;transform:scaleX(0.9850);">8803</span>
<span class="t" style="top:594px;font-size:16.3px;line-height:18px;color:#9c5700;right:1435.59px;transform-origin:100% 50%;transform:scaleX(0.9920);">8.803,00</span>
<span class="t" style="top:618px;font-size:16.3px;line-height:18px;color:#262626;left:17.00px;transform-origin:50% 50%;transform:translateX(-50%) scaleX(1.0200);">40</span>
<span class="t" style="top:618px;font-size:16.3px;line-height:18px;color:#2f3a7d;right:1622.86px;transform-origin:100% 50%;transform:scaleX(0.9850);">289</span>
<span class="t" style="top:618px;font-size:16.3px;line-height:18px;color:#9c5700;right:1435.57px;transform-origin:100% 50%;transform:scaleX(0.9920);">289,00</span>
<span class="t" style="top:642px;font-size:16.3px;line-height:18px;color:#262626;left:17.00px;transform-origin:50% 50%;transform:translateX(-50%) scaleX(1.0200);">41</span>
<span class="t" style="top:642px;font-size:16.3px;line-height:18px;color:#2f3a7d;right:1622.96px;transform-origin:100% 50%;transform:scaleX(0.9850);">4300</span>
<span class="t" style="top:642px;font-size:16.3px;line-height:18px;color:#9c5700;right:1435.59px;transform-origin:100% 50%;transform:scaleX(0.9920);">4.300,00</span>
<span class="t" style="top:666px;font-size:16.3px;line-height:18px;color:#262626;left:17.00px;transform-origin:50% 50%;transform:translateX(-50%) scaleX(1.0200);">42</span>
<span class="t" style="top:666px;font-size:16.3px;line-height:18px;color:#2f3a7d;right:1622.90px;transform-origin:100% 50%;transform:scaleX(0.9850);">35976</span>
<span class="t" style="top:666px;font-size:16.3px;line-height:18px;color:#9c5700;right:1435.57px;transform-origin:100% 50%;transform:scaleX(0.9920);">35.976,00</span>
<span class="t" style="top:690px;font-size:16.3px;line-height:18px;color:#262626;left:17.00px;transform-origin:50% 50%;transform:translateX(-50%) scaleX(1.0200);">43</span>
<span class="t" style="top:690px;font-size:16.3px;line-height:18px;color:#2f3a7d;right:1622.94px;transform-origin:100% 50%;transform:scaleX(0.9850);">38035</span>
<span class="t" style="top:690px;font-size:16.3px;line-height:18px;color:#9c5700;right:1435.57px;transform-origin:100% 50%;transform:scaleX(0.9920);">38.035,00</span>
<span class="t" style="top:714px;font-size:16.3px;line-height:18px;color:#262626;left:17.00px;transform-origin:50% 50%;transform:translateX(-50%) scaleX(1.0200);">44</span>
<span class="t" style="top:714px;font-size:16.3px;line-height:18px;color:#2f3a7d;right:1622.81px;transform-origin:100% 50%;transform:scaleX(0.9850);">-707</span>
<span class="t" style="top:714px;font-size:16.3px;line-height:18px;color:#9c5700;right:1435.57px;transform-origin:100% 50%;transform:scaleX(0.9920);">-707,00</span>
<span class="t" style="top:738px;font-size:16.3px;line-height:18px;color:#262626;left:17.00px;transform-origin:50% 50%;transform:translateX(-50%) scaleX(1.0200);">45</span>
<span class="t" style="top:738px;font-size:16.3px;line-height:18px;color:#2f3a7d;right:1623.16px;transform-origin:100% 50%;transform:scaleX(0.9850);">-1344</span>
<span class="t" style="top:738px;font-size:16.3px;line-height:18px;color:#9c5700;right:1435.58px;transform-origin:100% 50%;transform:scaleX(0.9920);">-1.344,00</span>
<span class="t" style="top:762px;font-size:16.3px;line-height:18px;color:#262626;left:17.00px;transform-origin:50% 50%;transform:translateX(-50%) scaleX(1.0200);">46</span>
<span class="t" style="top:762px;font-size:16.3px;line-height:18px;color:#2f3a7d;right:1622.90px;transform-origin:100% 50%;transform:scaleX(0.9850);">35903</span>
<span class="t" style="top:762px;font-size:16.3px;line-height:18px;color:#9c5700;right:1435.57px;transform-origin:100% 50%;transform:scaleX(0.9920);">35.903,00</span>
<span class="t" style="top:786px;font-size:16.3px;line-height:18px;color:#217346;left:17.00px;transform-origin:50% 50%;transform:translateX(-50%) scaleX(1.0200);">47</span>
<span class="t" style="top:786px;font-size:16.3px;line-height:18px;color:#2f3a7d;right:1623.16px;transform-origin:100% 50%;transform:scaleX(0.9850);">-3764</span>
<span class="t" style="top:786px;font-size:16.3px;line-height:18px;color:#9c5700;right:1435.58px;transform-origin:100% 50%;transform:scaleX(0.9920);">-3.764,00</span>
<span class="t" style="top:810px;font-size:16.3px;line-height:18px;color:#262626;left:17.00px;transform-origin:50% 50%;transform:translateX(-50%) scaleX(1.0200);">48</span>
<span class="t" style="top:810px;font-size:16.3px;line-height:18px;color:#2f3a7d;right:1622.94px;transform-origin:100% 50%;transform:scaleX(0.9850);">35558</span>
<span class="t" style="top:810px;font-size:16.3px;line-height:18px;color:#9c5700;right:1435.57px;transform-origin:100% 50%;transform:scaleX(0.9920);">35.558,00</span>
<span class="t" style="top:834px;font-size:16.3px;line-height:18px;color:#262626;left:17.00px;transform-origin:50% 50%;transform:translateX(-50%) scaleX(1.0200);">49</span>
<span class="t" style="top:834px;font-size:16.3px;line-height:18px;color:#2f3a7d;right:1623.12px;transform-origin:100% 50%;transform:scaleX(0.9850);">1034</span>
<span class="t" style="top:834px;font-size:16.3px;line-height:18px;color:#9c5700;right:1435.59px;transform-origin:100% 50%;transform:scaleX(0.9920);">1.034,00</span>
<span class="t" style="top:858px;font-size:16.3px;line-height:18px;color:#262626;left:17.00px;transform-origin:50% 50%;transform:translateX(-50%) scaleX(1.0200);">50</span>
<span class="t" style="top:858px;font-size:16.3px;line-height:18px;color:#2f3a7d;right:1622.82px;transform-origin:100% 50%;transform:scaleX(0.9850);">40971</span>
<span class="t" style="top:858px;font-size:16.3px;line-height:18px;color:#9c5700;right:1435.57px;transform-origin:100% 50%;transform:scaleX(0.9920);">40.971,00</span>
<span class="t" style="top:882px;font-size:16.3px;line-height:18px;color:#262626;left:17.00px;transform-origin:50% 50%;transform:translateX(-50%) scaleX(1.0200);">51</span>
<span class="t" style="top:882px;font-size:16.3px;line-height:18px;color:#2f3a7d;right:1622.85px;transform-origin:100% 50%;transform:scaleX(0.9850);">-139</span>
<span class="t" style="top:882px;font-size:16.3px;line-height:18px;color:#9c5700;right:1435.57px;transform-origin:100% 50%;transform:scaleX(0.9920);">-139,00</span>
<span class="t" style="top:906px;font-size:16.3px;line-height:18px;color:#262626;left:17.00px;transform-origin:50% 50%;transform:translateX(-50%) scaleX(1.0200);">52</span>
<span class="t" style="top:906px;font-size:16.3px;line-height:18px;color:#2f3a7d;right:1622.85px;transform-origin:100% 50%;transform:scaleX(0.9850);">-169</span>
<span class="t" style="top:906px;font-size:16.3px;line-height:18px;color:#9c5700;right:1435.57px;transform-origin:100% 50%;transform:scaleX(0.9920);">-169,00</span>
<span class="t" style="top:930px;font-size:16.3px;line-height:18px;color:#262626;left:17.00px;transform-origin:50% 50%;transform:translateX(-50%) scaleX(1.0200);">53</span>
<span class="t" style="top:930px;font-size:16.3px;line-height:18px;color:#2f3a7d;right:1622.90px;transform-origin:100% 50%;transform:scaleX(0.9850);">37216</span>
<span class="t" style="top:930px;font-size:16.3px;line-height:18px;color:#9c5700;right:1435.57px;transform-origin:100% 50%;transform:scaleX(0.9920);">37.216,00</span>
<span class="t" style="top:954px;font-size:16.3px;line-height:18px;color:#262626;left:17.00px;transform-origin:50% 50%;transform:translateX(-50%) scaleX(1.0200);">54</span>
<span class="t" style="top:954px;font-size:16.3px;line-height:18px;color:#2f3a7d;right:1622.94px;transform-origin:100% 50%;transform:scaleX(0.9850);">-1165</span>
<span class="t" style="top:954px;font-size:16.3px;line-height:18px;color:#9c5700;right:1435.58px;transform-origin:100% 50%;transform:scaleX(0.9920);">-1.165,00</span>
<span class="t" style="top:978px;font-size:16.3px;line-height:18px;color:#262626;left:17.00px;transform-origin:50% 50%;transform:translateX(-50%) scaleX(1.0200);">55</span>
<span class="t" style="top:978px;font-size:16.3px;line-height:18px;color:#2f3a7d;right:1622.82px;transform-origin:100% 50%;transform:scaleX(0.9850);">36862</span>
<span class="t" style="top:978px;font-size:16.3px;line-height:18px;color:#9c5700;right:1435.57px;transform-origin:100% 50%;transform:scaleX(0.9920);">36.862,00</span>
<span class="t" style="top:1002px;font-size:16.3px;line-height:18px;color:#262626;left:17.00px;transform-origin:50% 50%;transform:translateX(-50%) scaleX(1.0200);">56</span>
<span class="t" style="top:1002px;font-size:16.3px;line-height:18px;color:#2f3a7d;right:1622.95px;transform-origin:100% 50%;transform:scaleX(0.9850);">-3855</span>
<span class="t" style="top:1002px;font-size:16.3px;line-height:18px;color:#9c5700;right:1435.58px;transform-origin:100% 50%;transform:scaleX(0.9920);">-3.855,00</span>
<span class="t" style="top:330px;font-size:16.3px;line-height:18px;color:#000;left:36.17px;transform-origin:0 50%;transform:scaleX(0.9449);">Page 3</span>
<span class="t" style="top:618px;font-size:16.3px;line-height:18px;color:#000;left:36.17px;transform-origin:0 50%;transform:scaleX(0.9403);">Page 4</span>
<div class="b" style="left:32px;top:782px;width:2px;height:25px;background:#217346;"></div>
<div class="b" style="left:486px;top:781px;width:83px;height:27px;border:2px solid #217346;"></div>
<div class="b" style="left:564px;top:803px;width:7px;height:7px;background:#217346;border:1px solid #fff;"></div>
<div class="b" style="left:998px;top:276px;width:19px;height:730px;background:#d9d9d9;"></div>
<div class="b" style="left:998px;top:257px;width:19px;height:19px;background:#fff;border:1px solid #c6c6c6;"></div>
<svg style="left:1003px;top:263px" width="9" height="5" viewBox="0 0 9 5"><path d="M0 5h9L4.500 0z" fill="#777"/></svg>
<div class="b" style="left:998px;top:596px;width:19px;height:396px;background:#fff;border:1px solid #a6a6a6;"></div>
<div class="b" style="left:998px;top:1005px;width:19px;height:19px;background:#fff;border:1px solid #c6c6c6;"></div>
<svg style="left:1003px;top:1013px" width="9" height="5" viewBox="0 0 9 5"><path d="M0 0h9L4.500 5z" fill="#666"/></svg>
<div class="b" style="left:1020px;top:257px;width:1px;height:793px;background:#bdbdbd;"></div>
<div class="b" style="left:0px;top:1023px;width:996px;height:29px;background:#e6e6e6;"></div>
<svg style="left:27px;top:1032px" width="6" height="10" viewBox="0 0 6 10"><path d="M6 0v10L0 5z" fill="#c3c3c3"/></svg>
<svg style="left:55px;top:1032px" width="6" height="10" viewBox="0 0 6 10"><path d="M0 0v10L6 5z" fill="#c3c3c3"/></svg>
<div class="b" style="left:103px;top:1023px;width:68px;height:25px;background:#fff;"></div>
<div class="b" style="left:103px;top:1023px;width:1px;height:25px;background:#b0b0b0;"></div>
<div class="b" style="left:170px;top:1023px;width:1px;height:25px;background:#b0b0b0;"></div>
<div class="b" style="left:103px;top:1046.5px;width:68px;height:2.5px;background:#217346;"></div>
<span class="t" style="top:1025px;font-size:16.3px;line-height:18px;color:#217346;font-weight:700;left:114.55px;transform-origin:0 50%;transform:scaleX(0.9996);">Sums</span>
<span class="t" style="top:1025px;font-size:16.3px;line-height:18px;color:#444;left:182.55px;transform-origin:0 50%;transform:scaleX(1.0175);">Sheet1</span>
<div class="b" style="left:249px;top:1027px;width:1px;height:20px;background:#ababab;"></div>
<span class="t" style="top:1025px;font-size:16.3px;line-height:18px;color:#444;left:262.93px;transform-origin:0 50%;transform:scaleX(1.0485);">DataSnipper</span>
<div class="b" style="left:373px;top:1027px;width:1px;height:20px;background:#ababab;"></div>
<svg style="left:406px;top:1027px" width="22" height="22" viewBox="0 0 22 22" fill="none" stroke="#666" stroke-width="1.3"><circle cx="10.700" cy="10.700" r="9.600" stroke-width="1.300"/><path d="M5.700 10.700h10M10.700 5.700v10" stroke-width="1.400"/></svg>
<div class="b" style="left:609px;top:1031.5px;width:3px;height:3px;background:#a6a6a6;"></div>
<div class="b" style="left:609px;top:1036.5px;width:3px;height:3px;background:#a6a6a6;"></div>
<div class="b" style="left:609px;top:1041.5px;width:3px;height:3px;background:#a6a6a6;"></div>
<div class="b" style="left:627px;top:1028px;width:368px;height:19px;background:#d3d3d3;"></div>
<div class="b" style="left:627px;top:1028px;width:19px;height:19px;background:#fff;border:1px solid #c0c0c0;"></div>
<svg style="left:633px;top:1033px" width="6" height="9" viewBox="0 0 6 9"><path d="M6 0v9L0 4.500z" fill="#444"/></svg>
<div class="b" style="left:646px;top:1028px;width:293px;height:19px;background:#fff;border:1px solid #b5b5b5;"></div>
<div class="b" style="left:976px;top:1028px;width:19px;height:19px;background:#fff;border:1px solid #c0c0c0;"></div>
<svg style="left:983px;top:1033px" width="6" height="9" viewBox="0 0 6 9"><path d="M0 0v9L6 4.500z" fill="#444"/></svg>
<div class="b" style="left:0px;top:1052px;width:1920px;height:27px;background:#f3f2f1;"></div>
<div class="b" style="left:0px;top:1052px;width:1920px;height:1px;background:#d2d0ce;"></div>
<div class="b" style="left:0px;top:1078px;width:1920px;height:2px;background:#2e2e2e;"></div>
<div class="b" style="left:1548px;top:1053px;width:50px;height:25px;background:#c8c6c4;"></div>
<svg style="left:1563px;top:1056px" width="19" height="19" viewBox="0 0 19 19" fill="none" stroke="#333" stroke-width="1.6"><rect x="1.700" y="1.800" width="15.300" height="15.300"/><path d="M1.700 6.900h15.300M1.700 12h15.300M6.800 1.800v15.300M11.900 1.800v15.300"/></svg>
<svg style="left:1614px;top:1056px" width="19" height="19" viewBox="0 0 19 19" fill="none" stroke="#555" stroke-width="1.3"><rect x="1.200" y="1.900" width="16.400" height="15.400" stroke-width="1.300"/><rect x="4.900" y="5" width="9" height="9.200" stroke-width="1.200"/><path d="M6.700 7.700h5.400M6.700 9.700h5.400M6.700 11.700h5.400" stroke-width=".9"/></svg>
<svg style="left:1663px;top:1056px" width="19" height="19" viewBox="0 0 19 19" fill="none" stroke="#555" stroke-width="1.4"><rect x="1.800" y="1.900" width="16.200" height="15.400"/><path d="M1.800 10.200h11.700V1.900M7.700 1.900v8.300"/></svg>
<div class="b" style="left:1704px;top:1064.5px;width:10px;height:1.3px;background:#555;"></div>
<div class="b" style="left:1721px;top:1066px;width:125px;height:1px;background:#a6a6a6;"></div>
<div class="b" style="left:1781px;top:1059px;width:5.5px;height:14px;background:#737373;"></div>
<div class="b" style="left:1851px;top:1065px;width:10.5px;height:1.3px;background:#555;"></div>
<div class="b" style="left:1855.6px;top:1060.4px;width:1.3px;height:10.5px;background:#555;"></div>
<span class="t" style="top:1059px;font-size:13px;line-height:15px;color:#555;left:1878.08px;transform-origin:0 50%;transform:scaleX(0.9429);">100%</span>
<span class="t" style="top:271px;font-size:26.8px;line-height:30px;color:#38835d;left:1033.58px;transform-origin:0 50%;transform:scaleX(0.9887);">DataSnipper - Document Viewer</span>
<svg style="left:1835px;top:279px" width="11" height="6" viewBox="0 0 11 6"><path d="M0 0h11L5.500 6z" fill="#666"/></svg>
<svg style="left:1886px;top:276px" width="12" height="12" viewBox="0 0 12 12" fill="none" stroke="#5a5a5a" stroke-width="2"><path d="M.8.800l10.400 10.400M11.200.8L.8 11.200"/></svg>
<div class="b" style="left:1045px;top:315px;width:317px;height:28px;background:#f0f0f0;border:1px solid #adadad;"></div>
<div class="b" style="left:1341px;top:316px;width:1px;height:26px;background:#adadad;"></div>
<svg style="left:1348px;top:327px" width="7" height="4" viewBox="0 0 7 4"><path d="M0 0h7L3.500 4z" fill="#666"/></svg>
<span class="t" style="top:320px;font-size:17px;line-height:19px;color:#444;left:1053.36px;transform-origin:0 50%;transform:scaleX(0.9952);">Test.pdf | 112 snips</span>
<div class="b" style="left:1374px;top:315px;width:28.5px;height:28px;background:#f0f0f0;border:1px solid #adadad;"></div>
<div class="b" style="left:1401.5px;top:315px;width:28.5px;height:28px;background:#f0f0f0;border:1px solid #adadad;"></div>
<div class="b" style="left:1435px;top:315px;width:28.5px;height:28px;background:#f0f0f0;border:1px solid #adadad;"></div>
<div class="b" style="left:1462.5px;top:315px;width:29.5px;height:28px;background:#f0f0f0;border:1px solid #adadad;"></div>
<svg style="left:1377px;top:317px" width="24" height="24" viewBox="0 0 24 24" fill="none" stroke="#6e6e6e" stroke-width="1.4"><circle cx="13" cy="9.300" r="6.800"/><path d="M8.200 14.300L2 21"/><path d="M10 9.300h6"/></svg>
<svg style="left:1405px;top:317px" width="24" height="24" viewBox="0 0 24 24" fill="none" stroke="#6e6e6e" stroke-width="1.4"><circle cx="13" cy="9.300" r="6.800"/><path d="M8.200 14.300L2 21"/><path d="M10 9.300h6M13 6.300v6"/></svg>
<svg style="left:1437px;top:315px" width="24" height="24" viewBox="0 0 24 24" fill="none" stroke="#6e6e6e" stroke-width="1.5"><path d="M4.300 9.500A8.600 8.600 0 1 1 3.300 12.100"/><path d="M2.700 4.200v5.600h5.600z" fill="#6e6e6e" stroke="none"/></svg>
<svg style="left:1465px;top:315px" width="24" height="24" viewBox="0 0 24 24" fill="none" stroke="#6e6e6e" stroke-width="1.5"><path d="M19.700 9.500A8.600 8.600 0 1 0 20.700 12.100"/><path d="M21.300 4.200v5.600h-5.600z" fill="#6e6e6e" stroke="none"/></svg>
<div class="b" style="left:1503px;top:315px;width:139px;height:28px;background:#f0f0f0;border:1px solid #adadad;"></div>
<div class="b" style="left:1621px;top:316px;width:1px;height:26px;background:#adadad;"></div>
<svg style="left:1628px;top:327px" width="7" height="4" viewBox="0 0 7 4"><path d="M0 0h7L3.500 4z" fill="#666"/></svg>
<span class="t" style="top:320px;font-size:17px;line-height:19px;color:#444;left:1510.30px;transform-origin:0 50%;transform:scaleX(1.0294);">No selection</span>
<div class="b" style="left:1654px;top:315px;width:220px;height:28px;background:#fff;border:1px solid #adadad;"></div>
<div class="b" style="left:1853px;top:316px;width:1px;height:26px;background:#adadad;"></div>
<div class="b" style="left:1854px;top:316px;width:19px;height:26px;background:#f0f0f0;"></div>
<span class="t" style="top:320px;font-size:17px;line-height:19px;color:#444;left:1657.99px;transform-origin:0 50%;transform:scaleX(0.9766);">-3764</span>
<svg style="left:1858px;top:323px" width="12" height="12" viewBox="0 0 12 12" fill="none" stroke="#666" stroke-width="1.1"><circle cx="7.500" cy="4.500" r="3.300"/><path d="M5.200 6.800L1 11"/></svg>
<div class="b" style="left:1046px;top:345px;width:829px;height:676px;background:#fff;"></div>
<div class="b" style="left:1045px;top:345px;width:1px;height:676px;background:#a6a6a6;"></div>
<div class="b" style="left:1874px;top:345px;width:1px;height:676px;background:#a6a6a6;"></div>
<div class="b" style="left:1889px;top:345px;width:21px;height:676px;background:#ebebeb;"></div>
<svg style="left:1895.5px;top:352px" width="8" height="6" viewBox="0 0 8 6" fill="none" stroke="#6e6e6e" stroke-width="2"><path d="M.9 5.400L4 1.700 7.100 5.400"/></svg>
<svg style="left:1895.5px;top:1008px" width="8" height="6" viewBox="0 0 8 6" fill="none" stroke="#6e6e6e" stroke-width="2"><path d="M.9.600L4 4.300 7.100.6"/></svg>
<div class="b" style="left:1889px;top:858px;width:21px;height:88px;background:#cdcdcd;"></div>
<div class="b" style="left:1030px;top:1021px;width:879px;height:21px;background:#ebebeb;"></div>
<svg style="left:1037px;top:1028px" width="6" height="8" viewBox="0 0 6 8" fill="none" stroke="#c4c4c4" stroke-width="1.9"><path d="M5.200 .6L1.500 3.800 5.200 7"/></svg>
<svg style="left:1875px;top:1028px" width="6" height="8" viewBox="0 0 6 8" fill="none" stroke="#c4c4c4" stroke-width="1.9"><path d="M.8 .6L4.500 3.800 .8 7"/></svg>
<div class="b" style="left:1396.7px;top:459.4px;width:28.6px;height:35.8px;background:rgba(255,215,80,.30);"></div>
<div class="b" style="left:1441.5px;top:459.4px;width:32.0px;height:92.1px;background:rgba(255,215,80,.30);"></div>
<div class="b" style="left:1501.7px;top:459.4px;width:21.1px;height:69.8px;background:rgba(255,215,80,.30);"></div>
<div class="b" style="left:1599.4px;top:459.4px;width:32.5px;height:92.1px;background:rgba(255,215,80,.30);"></div>
<div class="b" style="left:1683.7px;top:459.4px;width:20.7px;height:46.9px;background:rgba(255,215,80,.30);"></div>
<div class="b" style="left:1721.9px;top:459.4px;width:31.4px;height:92.1px;background:rgba(255,215,80,.30);"></div>
<div class="b" style="left:1396.7px;top:459.4px;width:126.1px;height:12.9px;background:rgba(255,215,80,.30);"></div>
<div class="b" style="left:1599.4px;top:459.4px;width:105.0px;height:12.9px;background:rgba(255,215,80,.30);"></div>
<div class="b" style="left:1603.4px;top:493.7px;width:101.0px;height:12.6px;background:rgba(255,215,80,.30);"></div>
<div class="b" style="left:1444.6px;top:504.9px;width:78.2px;height:13.2px;background:rgba(255,215,80,.30);"></div>
<div class="b" style="left:1398.7px;top:539.3px;width:26.6px;height:82.1px;background:rgba(255,215,80,.30);"></div>
<div class="b" style="left:1441.5px;top:551.5px;width:32.0px;height:91.0px;background:rgba(255,215,80,.30);"></div>
<div class="b" style="left:1501.7px;top:539.3px;width:21.1px;height:93.9px;background:rgba(255,215,80,.30);"></div>
<div class="b" style="left:1599.4px;top:551.5px;width:32.5px;height:91.0px;background:rgba(255,215,80,.30);"></div>
<div class="b" style="left:1683.7px;top:539.3px;width:20.7px;height:59.2px;background:rgba(255,215,80,.30);"></div>
<div class="b" style="left:1721.9px;top:551.5px;width:31.4px;height:91.0px;background:rgba(255,215,80,.30);"></div>
<div class="b" style="left:1447.6px;top:550.5px;width:136.1px;height:14.0px;background:rgba(255,215,80,.30);"></div>
<div class="b" style="left:1603.4px;top:585.9px;width:101.0px;height:12.6px;background:rgba(255,215,80,.30);"></div>
<div class="b" style="left:1599.4px;top:459.4px;width:32.5px;height:12.9px;background:rgba(110,100,170,.40);"></div>
<div class="b" style="left:1721.9px;top:459.4px;width:31.4px;height:12.9px;background:rgba(110,100,170,.40);"></div>
<div class="b" style="left:1721.9px;top:459.4px;width:31.4px;height:12.9px;background:rgba(125,125,250,.18);"></div>
<div class="b" style="left:1724.7px;top:493.7px;width:28.6px;height:12.6px;background:rgba(110,100,170,.40);"></div>
<div class="b" style="left:1724.7px;top:493.7px;width:28.6px;height:12.6px;background:rgba(125,125,250,.15);"></div>
<div class="b" style="left:1603.4px;top:504.9px;width:28.5px;height:13.2px;background:rgba(110,100,170,.40);"></div>
<div class="b" style="left:1407px;top:539.3px;width:18.3px;height:12.9px;background:rgba(110,100,170,.40);"></div>
<div class="b" style="left:1441.5px;top:539.3px;width:32.0px;height:12.9px;background:rgba(110,100,170,.40);"></div>
<div class="b" style="left:1501.7px;top:539.3px;width:21.1px;height:12.9px;background:rgba(110,100,170,.40);"></div>
<div class="b" style="left:1599.4px;top:539.3px;width:32.5px;height:12.9px;background:rgba(110,100,170,.40);"></div>
<div class="b" style="left:1599.4px;top:539.3px;width:32.5px;height:12.9px;background:rgba(125,125,250,.2);"></div>
<div class="b" style="left:1683.7px;top:539.3px;width:20.7px;height:12.9px;background:rgba(110,100,170,.40);"></div>
<div class="b" style="left:1721.9px;top:539.3px;width:31.4px;height:12.9px;background:rgba(110,100,170,.40);"></div>
<div class="b" style="left:1721.9px;top:539.3px;width:31.4px;height:12.9px;background:rgba(125,125,250,.15);"></div>
<div class="b" style="left:1605.5px;top:550.5px;width:26.4px;height:14.0px;background:rgba(110,100,170,.40);"></div>
<div class="b" style="left:1605.5px;top:550.5px;width:26.4px;height:14.0px;background:rgba(125,125,250,.2);"></div>
<div class="b" style="left:1724.7px;top:585.9px;width:28.6px;height:12.6px;background:rgba(110,100,170,.40);"></div>
<div class="b" style="left:1398.7px;top:642.5px;width:26.6px;height:13.8px;background:rgba(125,125,250,.42);"></div>
<div class="b" style="left:1441.5px;top:642.5px;width:32.0px;height:13.8px;background:rgba(125,125,250,.42);"></div>
<div class="b" style="left:1493.7px;top:642.5px;width:29.1px;height:13.8px;background:rgba(125,125,250,.42);"></div>
<div class="b" style="left:1599.4px;top:642.5px;width:32.5px;height:13.8px;background:rgba(125,125,250,.42);"></div>
<div class="b" style="left:1683.7px;top:642.5px;width:20.7px;height:13.8px;background:rgba(125,125,250,.42);"></div>
<div class="b" style="left:1721.9px;top:642.5px;width:31.4px;height:13.8px;background:rgba(125,125,250,.42);"></div>
<span class="t" style="top:382px;font-size:12.3px;line-height:14px;color:#000;font-weight:700;left:1168.85px;transform-origin:0 50%;transform:scaleX(0.9237);">Consolidated Statement of Changes in Equity</span>
<span class="t" style="top:397px;font-size:11.9px;line-height:14px;color:#111;left:1168.55px;transform-origin:0 50%;transform:scaleX(1.0489);">(for the years ended December 31, 2001 and 2000)</span>
<span class="t" style="top:445px;font-size:6.8px;line-height:7px;color:#000;font-weight:700;left:1169.19px;transform-origin:0 50%;transform:scaleX(0.9573);">(CHF millions)</span>
<span class="t" style="top:445px;font-size:6.8px;line-height:7px;color:#000;font-weight:700;left:1357.26px;transform-origin:0 50%;transform:scaleX(1.0060);">Notes</span>
<span class="t" style="top:437px;font-size:6.8px;line-height:7px;color:#000;font-weight:700;right:494.76px;transform-origin:100% 50%;transform:scaleX(1.0282);">Share</span>
<span class="t" style="top:445px;font-size:6.8px;line-height:7px;color:#000;font-weight:700;right:494.58px;transform-origin:100% 50%;transform:scaleX(1.0049);">premium</span>
<span class="t" style="top:437px;font-size:6.8px;line-height:7px;color:#000;font-weight:700;right:446.26px;transform-origin:100% 50%;transform:scaleX(0.9918);">Retained</span>
<span class="t" style="top:445px;font-size:6.8px;line-height:7px;color:#000;font-weight:700;right:446.46px;transform-origin:100% 50%;transform:scaleX(0.9343);">earnings</span>
<span class="t" style="top:428px;font-size:6.8px;line-height:7px;color:#000;font-weight:700;right:397.79px;transform-origin:100% 50%;transform:scaleX(0.9597);">Cumulative</span>
<span class="t" style="top:437px;font-size:6.8px;line-height:7px;color:#000;font-weight:700;right:397.59px;transform-origin:100% 50%;transform:scaleX(0.9629);">translation</span>
<span class="t" style="top:445px;font-size:6.8px;line-height:7px;color:#000;font-weight:700;right:397.75px;transform-origin:100% 50%;transform:scaleX(0.9706);">differences</span>
<span class="t" style="top:428px;font-size:6.8px;line-height:7px;color:#000;font-weight:700;right:336.81px;transform-origin:100% 50%;transform:scaleX(0.9842);">Fair value of</span>
<span class="t" style="top:437px;font-size:6.8px;line-height:7px;color:#000;font-weight:700;right:336.38px;transform-origin:100% 50%;transform:scaleX(0.9952);">deferred cash</span>
<span class="t" style="top:445px;font-size:6.8px;line-height:7px;color:#000;font-weight:700;right:336.55px;transform-origin:100% 50%;transform:scaleX(0.9658);">flow hedges</span>
<span class="t" style="top:437px;font-size:6.8px;line-height:7px;color:#000;font-weight:700;right:288.03px;transform-origin:100% 50%;transform:scaleX(0.9870);">Total</span>
<span class="t" style="top:445px;font-size:6.8px;line-height:7px;color:#000;font-weight:700;right:288.25px;transform-origin:100% 50%;transform:scaleX(0.9676);">reserves</span>
<span class="t" style="top:437px;font-size:6.8px;line-height:7px;color:#000;font-weight:700;right:251.76px;transform-origin:100% 50%;transform:scaleX(1.0228);">Share</span>
<span class="t" style="top:445px;font-size:6.8px;line-height:7px;color:#000;font-weight:700;right:251.52px;transform-origin:100% 50%;transform:scaleX(1.0092);">capital</span>
<span class="t" style="top:437px;font-size:6.8px;line-height:7px;color:#000;font-weight:700;right:215.97px;transform-origin:100% 50%;transform:scaleX(0.9485);">Treasury</span>
<span class="t" style="top:445px;font-size:6.8px;line-height:7px;color:#000;font-weight:700;right:215.74px;transform-origin:100% 50%;transform:scaleX(0.9664);">shares</span>
<span class="t" style="top:437px;font-size:6.8px;line-height:7px;color:#000;font-weight:700;right:166.33px;transform-origin:100% 50%;transform:scaleX(0.9870);">Total</span>
<span class="t" style="top:445px;font-size:6.8px;line-height:7px;color:#000;font-weight:700;right:166.78px;transform-origin:100% 50%;transform:scaleX(0.9466);">equity</span>
<span class="t" style="top:460px;font-size:9.7px;line-height:11px;color:#000;font-weight:700;left:1169.56px;transform-origin:0 50%;transform:scaleX(0.9825);">January 1, 2000</span>
<span class="t" style="top:460px;font-size:9.7px;line-height:11px;color:#000;font-weight:700;right:494.97px;transform-origin:100% 50%;transform:scaleX(0.9300);">2 475</span>
<span class="t" style="top:460px;font-size:9.7px;line-height:11px;color:#000;font-weight:700;right:446.76px;transform-origin:100% 50%;transform:scaleX(0.9300);">33 455</span>
<span class="t" style="top:460px;font-size:9.7px;line-height:11px;color:#000;font-weight:700;right:397.61px;transform-origin:100% 50%;transform:scaleX(0.9300);">-27</span>
<span class="t" style="top:460px;font-size:9.7px;line-height:11px;color:#000;font-weight:700;right:288.40px;transform-origin:100% 50%;transform:scaleX(0.9300);">35 903</span>
<span class="t" style="top:460px;font-size:9.7px;line-height:11px;color:#000;font-weight:700;right:251.91px;transform-origin:100% 50%;transform:scaleX(0.9300);">1 443</span>
<span class="t" style="top:460px;font-size:9.7px;line-height:11px;color:#000;font-weight:700;right:215.85px;transform-origin:100% 50%;transform:scaleX(0.9300);">-130</span>
<span class="t" style="top:460px;font-size:9.7px;line-height:11px;color:#000;font-weight:700;right:166.70px;transform-origin:100% 50%;transform:scaleX(0.9300);">37 216</span>
<span class="t" style="top:472px;font-size:9.9px;line-height:11px;color:#0a0a0a;left:1168.91px;transform-origin:0 50%;transform:scaleX(0.9943);">Dividends to third parties</span>
<span class="t" style="top:472px;font-size:9.6px;line-height:11px;color:#0a0a0a;left:1359.53px;transform-origin:0 50%;transform:scaleX(0.9700);">25a</span>
<span class="t" style="top:472px;font-size:9.6px;line-height:11px;color:#333;right:446.73px;transform-origin:100% 50%;">-2 084</span>
<span class="t" style="top:472px;font-size:9.6px;line-height:11px;color:#333;right:288.43px;transform-origin:100% 50%;">-2 084</span>
<span class="t" style="top:472px;font-size:9.6px;line-height:11px;color:#333;right:166.73px;transform-origin:100% 50%;">-2 084</span>
<span class="t" style="top:483px;font-size:9.9px;line-height:11px;color:#0a0a0a;left:1169.51px;transform-origin:0 50%;transform:scaleX(0.9832);">Transfer of share premium</span>
<span class="t" style="top:483px;font-size:9.6px;line-height:11px;color:#0a0a0a;left:1359.53px;transform-origin:0 50%;transform:scaleX(0.9700);">25b</span>
<span class="t" style="top:483px;font-size:9.6px;line-height:11px;color:#333;right:494.79px;transform-origin:100% 50%;">-2 186</span>
<span class="t" style="top:483px;font-size:9.6px;line-height:11px;color:#333;right:446.59px;transform-origin:100% 50%;">2 186</span>
<span class="t" style="top:495px;font-size:9.9px;line-height:11px;color:#0a0a0a;left:1169.70px;transform-origin:0 50%;transform:scaleX(0.9713);">Acquisition of treasury shares</span>
<span class="t" style="top:495px;font-size:9.6px;line-height:11px;color:#333;right:446.59px;transform-origin:100% 50%;">-1 156</span>
<span class="t" style="top:495px;font-size:9.6px;line-height:11px;color:#333;right:288.29px;transform-origin:100% 50%;">-1 156</span>
<span class="t" style="top:495px;font-size:9.6px;line-height:11px;color:#333;right:215.75px;transform-origin:100% 50%;">-9</span>
<span class="t" style="top:495px;font-size:9.6px;line-height:11px;color:#333;right:166.61px;transform-origin:100% 50%;">-1 165</span>
<span class="t" style="top:506px;font-size:9.9px;line-height:11px;color:#0a0a0a;left:1168.93px;transform-origin:0 50%;transform:scaleX(0.9768);">Effect of Agribusiness spin-off</span>
<span class="t" style="top:506px;font-size:9.6px;line-height:11px;color:#0a0a0a;left:1359.53px;transform-origin:0 50%;transform:scaleX(0.9700);">25c</span>
<span class="t" style="top:506px;font-size:9.6px;line-height:11px;color:#333;right:446.61px;transform-origin:100% 50%;">-3 655</span>
<span class="t" style="top:506px;font-size:9.6px;line-height:11px;color:#333;right:397.55px;transform-origin:100% 50%;">-109</span>
<span class="t" style="top:506px;font-size:9.6px;line-height:11px;color:#333;right:288.43px;transform-origin:100% 50%;">-3 764</span>
<span class="t" style="top:506px;font-size:9.6px;line-height:11px;color:#333;right:166.73px;transform-origin:100% 50%;">-3 764</span>
<span class="t" style="top:518px;font-size:9.9px;line-height:11px;color:#0a0a0a;left:1169.50px;transform-origin:0 50%;transform:scaleX(0.9938);">Translation effects</span>
<span class="t" style="top:518px;font-size:9.6px;line-height:11px;color:#0a0a0a;left:1359.53px;transform-origin:0 50%;transform:scaleX(0.9700);">25d</span>
<span class="t" style="top:518px;font-size:9.6px;line-height:11px;color:#333;right:397.53px;transform-origin:100% 50%;">-571</span>
<span class="t" style="top:518px;font-size:9.6px;line-height:11px;color:#333;right:288.23px;transform-origin:100% 50%;">-571</span>
<span class="t" style="top:518px;font-size:9.6px;line-height:11px;color:#333;right:166.53px;transform-origin:100% 50%;">-571</span>
<span class="t" style="top:529px;font-size:9.9px;line-height:11px;color:#0a0a0a;left:1168.91px;transform-origin:0 50%;transform:scaleX(0.9927);">Net income</span>
<span class="t" style="top:529px;font-size:9.6px;line-height:11px;color:#333;right:446.64px;transform-origin:100% 50%;">7 210</span>
<span class="t" style="top:529px;font-size:9.6px;line-height:11px;color:#333;right:288.34px;transform-origin:100% 50%;">7 210</span>
<span class="t" style="top:529px;font-size:9.6px;line-height:11px;color:#333;right:166.64px;transform-origin:100% 50%;">7 210</span>
<span class="t" style="top:541px;font-size:9.7px;line-height:11px;color:#000;font-weight:700;left:1169.06px;transform-origin:0 50%;transform:scaleX(1.0156);">December 31, 2000</span>
<span class="t" style="top:541px;font-size:9.7px;line-height:11px;color:#000;font-weight:700;right:494.88px;transform-origin:100% 50%;transform:scaleX(0.9300);">289</span>
<span class="t" style="top:541px;font-size:9.7px;line-height:11px;color:#000;font-weight:700;right:446.70px;transform-origin:100% 50%;transform:scaleX(0.9300);">35 976</span>
<span class="t" style="top:541px;font-size:9.7px;line-height:11px;color:#000;font-weight:700;right:397.60px;transform-origin:100% 50%;transform:scaleX(0.9300);">-707</span>
<span class="t" style="top:541px;font-size:9.7px;line-height:11px;color:#000;font-weight:700;right:336.74px;transform-origin:100% 50%;transform:scaleX(0.9300);">–</span>
<span class="t" style="top:541px;font-size:9.7px;line-height:11px;color:#000;font-weight:700;right:288.44px;transform-origin:100% 50%;transform:scaleX(0.9300);">35 558</span>
<span class="t" style="top:541px;font-size:9.7px;line-height:11px;color:#000;font-weight:700;right:251.91px;transform-origin:100% 50%;transform:scaleX(0.9300);">1 443</span>
<span class="t" style="top:541px;font-size:9.7px;line-height:11px;color:#000;font-weight:700;right:215.87px;transform-origin:100% 50%;transform:scaleX(0.9300);">-139</span>
<span class="t" style="top:541px;font-size:9.7px;line-height:11px;color:#000;font-weight:700;right:166.65px;transform-origin:100% 50%;transform:scaleX(0.9300);">36 862</span>
<span class="t" style="top:552px;font-size:9.9px;line-height:11px;color:#0a0a0a;left:1168.91px;transform-origin:0 50%;transform:scaleX(0.9914);">Fair value adjustments on financial</span>
<span class="t" style="top:552px;font-size:9.6px;line-height:11px;color:#0a0a0a;left:1359.53px;transform-origin:0 50%;transform:scaleX(0.9700);">25e</span>
<span class="t" style="top:552px;font-size:9.6px;line-height:11px;color:#333;right:446.74px;transform-origin:100% 50%;">1 054</span>
<span class="t" style="top:552px;font-size:9.6px;line-height:11px;color:#333;right:336.64px;transform-origin:100% 50%;">-20</span>
<span class="t" style="top:552px;font-size:9.6px;line-height:11px;color:#333;right:288.44px;transform-origin:100% 50%;">1 034</span>
<span class="t" style="top:552px;font-size:9.6px;line-height:11px;color:#333;right:166.74px;transform-origin:100% 50%;">1 034</span>
<span class="t" style="top:564px;font-size:9.9px;line-height:11px;color:#0a0a0a;left:1169.05px;transform-origin:0 50%;transform:scaleX(1.0106);">instruments</span>
<span class="t" style="top:575px;font-size:9.9px;line-height:11px;color:#0a0a0a;left:1168.91px;transform-origin:0 50%;transform:scaleX(0.9943);">Dividends to third parties</span>
<span class="t" style="top:575px;font-size:9.6px;line-height:11px;color:#0a0a0a;left:1359.53px;transform-origin:0 50%;transform:scaleX(0.9700);">25a</span>
<span class="t" style="top:575px;font-size:9.6px;line-height:11px;color:#333;right:446.73px;transform-origin:100% 50%;">-2 194</span>
<span class="t" style="top:575px;font-size:9.6px;line-height:11px;color:#333;right:288.43px;transform-origin:100% 50%;">-2 194</span>
<span class="t" style="top:575px;font-size:9.6px;line-height:11px;color:#333;right:166.73px;transform-origin:100% 50%;">-2 194</span>
<span class="t" style="top:587px;font-size:9.9px;line-height:11px;color:#0a0a0a;left:1169.70px;transform-origin:0 50%;transform:scaleX(0.9713);">Acquisition of treasury shares</span>
<span class="t" style="top:587px;font-size:9.6px;line-height:11px;color:#0a0a0a;left:1359.53px;transform-origin:0 50%;transform:scaleX(0.9700);">25 f</span>
<span class="t" style="top:587px;font-size:9.6px;line-height:11px;color:#333;right:446.61px;transform-origin:100% 50%;">-3 825</span>
<span class="t" style="top:587px;font-size:9.6px;line-height:11px;color:#333;right:288.31px;transform-origin:100% 50%;">-3 825</span>
<span class="t" style="top:587px;font-size:9.6px;line-height:11px;color:#333;right:215.84px;transform-origin:100% 50%;">-30</span>
<span class="t" style="top:587px;font-size:9.6px;line-height:11px;color:#333;right:166.61px;transform-origin:100% 50%;">-3 855</span>
<span class="t" style="top:598px;font-size:9.9px;line-height:11px;color:#0a0a0a;left:1168.83px;transform-origin:0 50%;transform:scaleX(0.9784);">Issue of call options on Novartis shares</span>
<span class="t" style="top:598px;font-size:9.6px;line-height:11px;color:#0a0a0a;left:1359.53px;transform-origin:0 50%;transform:scaleX(0.9700);">25g</span>
<span class="t" style="top:598px;font-size:9.6px;line-height:11px;color:#333;right:494.74px;transform-origin:100% 50%;">3 102</span>
<span class="t" style="top:598px;font-size:9.6px;line-height:11px;color:#333;right:288.24px;transform-origin:100% 50%;">3 102</span>
<span class="t" style="top:598px;font-size:9.6px;line-height:11px;color:#333;right:166.54px;transform-origin:100% 50%;">3 102</span>
<span class="t" style="top:610px;font-size:9.9px;line-height:11px;color:#0a0a0a;left:1168.83px;transform-origin:0 50%;transform:scaleX(0.9788);">Issue of put options on Novartis shares</span>
<span class="t" style="top:610px;font-size:9.6px;line-height:11px;color:#0a0a0a;left:1359.53px;transform-origin:0 50%;transform:scaleX(0.9700);">25h</span>
<span class="t" style="top:610px;font-size:9.6px;line-height:11px;color:#333;right:494.76px;transform-origin:100% 50%;">909</span>
<span class="t" style="top:610px;font-size:9.6px;line-height:11px;color:#333;right:288.26px;transform-origin:100% 50%;">909</span>
<span class="t" style="top:610px;font-size:9.6px;line-height:11px;color:#333;right:166.56px;transform-origin:100% 50%;">909</span>
<span class="t" style="top:621px;font-size:9.9px;line-height:11px;color:#0a0a0a;left:1169.50px;transform-origin:0 50%;transform:scaleX(0.9938);">Translation effects</span>
<span class="t" style="top:621px;font-size:9.6px;line-height:11px;color:#0a0a0a;left:1359.53px;transform-origin:0 50%;transform:scaleX(0.9700);">25d</span>
<span class="t" style="top:621px;font-size:9.6px;line-height:11px;color:#333;right:397.53px;transform-origin:100% 50%;">-637</span>
<span class="t" style="top:621px;font-size:9.6px;line-height:11px;color:#333;right:288.23px;transform-origin:100% 50%;">-637</span>
<span class="t" style="top:621px;font-size:9.6px;line-height:11px;color:#333;right:166.53px;transform-origin:100% 50%;">-637</span>
<span class="t" style="top:633px;font-size:9.9px;line-height:11px;color:#0a0a0a;left:1168.91px;transform-origin:0 50%;transform:scaleX(0.9927);">Net income</span>
<span class="t" style="top:633px;font-size:9.6px;line-height:11px;color:#333;right:446.74px;transform-origin:100% 50%;">7 024</span>
<span class="t" style="top:633px;font-size:9.6px;line-height:11px;color:#333;right:288.44px;transform-origin:100% 50%;">7 024</span>
<span class="t" style="top:633px;font-size:9.6px;line-height:11px;color:#333;right:166.74px;transform-origin:100% 50%;">7 024</span>
<span class="t" style="top:644px;font-size:9.7px;line-height:11px;color:#000;font-weight:700;left:1169.06px;transform-origin:0 50%;transform:scaleX(1.0176);">December 31, 2001</span>
<span class="t" style="top:644px;font-size:9.7px;line-height:11px;color:#000;font-weight:700;right:494.86px;transform-origin:100% 50%;transform:scaleX(0.9300);">4 300</span>
<span class="t" style="top:644px;font-size:9.7px;line-height:11px;color:#000;font-weight:700;right:446.76px;transform-origin:100% 50%;transform:scaleX(0.9300);">38 035</span>
<span class="t" style="top:644px;font-size:9.7px;line-height:11px;color:#000;font-weight:700;right:397.97px;transform-origin:100% 50%;transform:scaleX(0.9300);">-1 344</span>
<span class="t" style="top:644px;font-size:9.7px;line-height:11px;color:#000;font-weight:700;right:336.66px;transform-origin:100% 50%;transform:scaleX(0.9300);">-20</span>
<span class="t" style="top:644px;font-size:9.7px;line-height:11px;color:#000;font-weight:700;right:288.46px;transform-origin:100% 50%;transform:scaleX(0.9300);">40 971</span>
<span class="t" style="top:644px;font-size:9.7px;line-height:11px;color:#000;font-weight:700;right:251.91px;transform-origin:100% 50%;transform:scaleX(0.9300);">1 443</span>
<span class="t" style="top:644px;font-size:9.7px;line-height:11px;color:#000;font-weight:700;right:215.87px;transform-origin:100% 50%;transform:scaleX(0.9300);">-169</span>
<span class="t" style="top:644px;font-size:9.7px;line-height:11px;color:#000;font-weight:700;right:166.76px;transform-origin:100% 50%;transform:scaleX(0.9300);">42 245</span>
<span class="t" style="top:671px;font-size:8.4px;line-height:10px;color:#111;left:1169.13px;transform-origin:0 50%;transform:scaleX(1.0056);">The accompanying notes form an integral part of the consolidated financial statements.</span>
</div></body></html>
